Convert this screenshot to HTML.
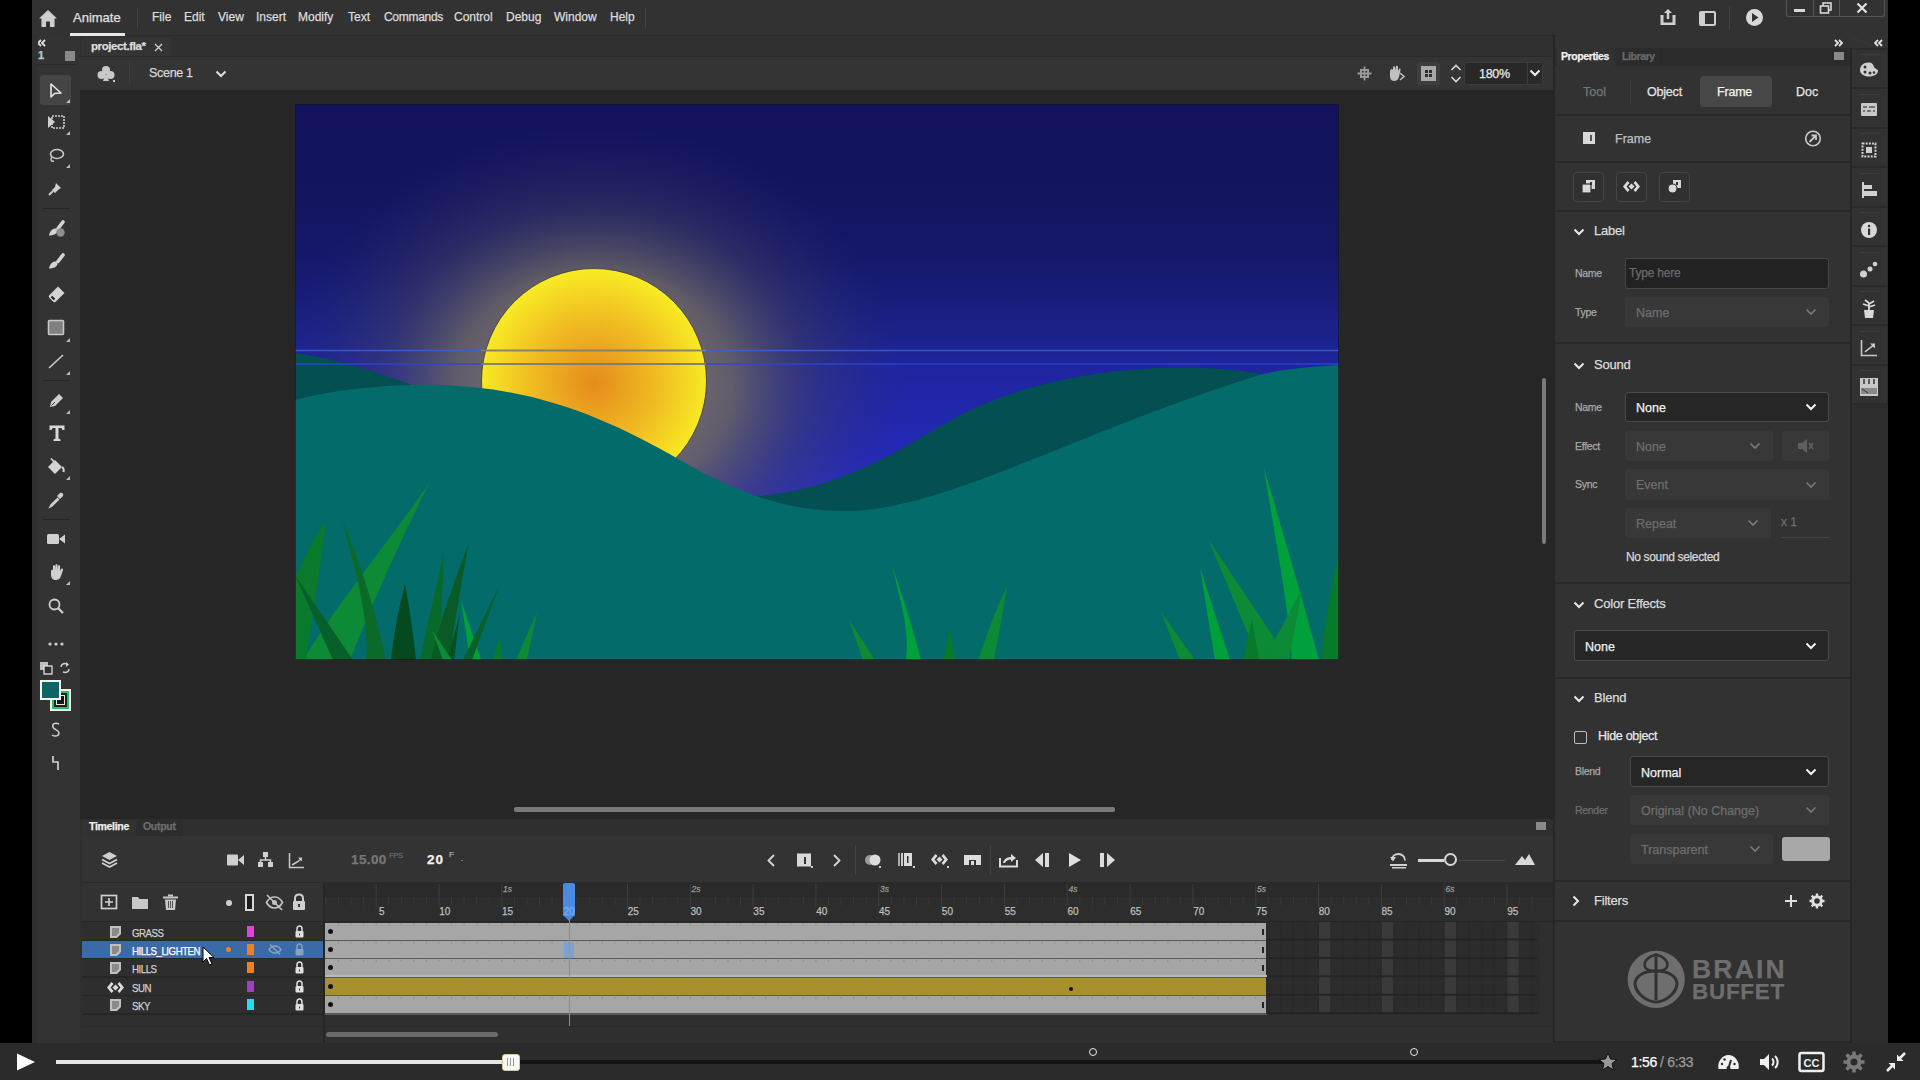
<!DOCTYPE html>
<html><head><meta charset="utf-8">
<style>
*{margin:0;padding:0;box-sizing:border-box}
html,body{width:1920px;height:1080px;overflow:hidden;background:#000;font-family:"Liberation Sans",sans-serif;color:#d4d4d4}
div.a{-webkit-text-stroke:0.25px currentColor;white-space:nowrap}
.a{position:absolute}
#menubar{left:32px;top:0;width:1856px;height:35px;background:#323232}
#toolbar{left:32px;top:35px;width:48px;height:1008px;background:#333333}
#tabbar{left:80px;top:35px;width:1473px;height:22px;background:#303030;border-top:1px solid #2a2a2a;border-bottom:1px solid #2a2a2a}
#scenebar{left:80px;top:57px;width:1473px;height:33px;background:#343434}
#paste{left:80px;top:90px;width:1473px;height:729px;background:#262626}
#timeline{left:80px;top:819px;width:1473px;height:224px;background:#2f2f2f}
#props{left:1553px;top:35px;width:297px;height:1008px;background:#323232}
#rstrip{left:1850px;top:35px;width:38px;height:1008px;background:#2d2d2d}
#player{left:0;top:1043px;width:1920px;height:37px;background:#2b2b2b}
.mi{font-size:12px;color:#dcdcdc;top:10px}
</style></head><body>
<div id="menubar" class="a"></div>
<div id="toolbar" class="a"></div>
<div id="tabbar" class="a"></div>
<div id="scenebar" class="a"></div>
<div id="paste" class="a"></div>
<div id="timeline" class="a"></div>
<div id="props" class="a"></div>
<div id="rstrip" class="a"></div>
<div id="player" class="a"></div>


<!-- MENU BAR -->
<svg class="a" style="left:38px;top:9px" width="20" height="19" viewBox="0 0 20 19"><path d="M10 1 L19 9.5 L16.5 9.5 L16.5 18 L12 18 L12 12.5 L8 12.5 L8 18 L3.5 18 L3.5 9.5 L1 9.5 Z" fill="#cfcfcf"/></svg>
<div class="a" style="left:73px;top:10px;font-size:13px;color:#e0e0e0">Animate</div>
<div class="a" style="left:70px;top:33px;width:55px;height:2.5px;background:#e8e8e8"></div>
<div class="a" style="left:137px;top:8px;width:1px;height:20px;background:#444"></div>
<div class="a mi" style="left:152px">File</div>
<div class="a mi" style="left:184px">Edit</div>
<div class="a mi" style="left:218px">View</div>
<div class="a mi" style="left:256px">Insert</div>
<div class="a mi" style="left:298px">Modify</div>
<div class="a mi" style="left:348px">Text</div>
<div class="a mi" style="left:384px;letter-spacing:-0.3px">Commands</div>
<div class="a mi" style="left:454px">Control</div>
<div class="a mi" style="left:506px">Debug</div>
<div class="a mi" style="left:554px">Window</div>
<div class="a mi" style="left:610px">Help</div>
<div class="a" style="left:645px;top:8px;width:1px;height:20px;background:#444"></div>
<!-- top right icons -->
<svg class="a" style="left:1658px;top:7px" width="20" height="20" viewBox="0 0 20 20"><path d="M10 2 L14 6 L11.2 6 L11.2 12 L8.8 12 L8.8 6 L6 6 Z" fill="#cfcfcf"/><path d="M2.5 8 L5.5 8 L5.5 15.5 L14.5 15.5 L14.5 8 L17.5 8 L17.5 18 L2.5 18 Z" fill="#cfcfcf"/></svg>
<svg class="a" style="left:1699px;top:11px" width="17" height="15" viewBox="0 0 17 15"><rect x="1" y="1" width="15" height="13" rx="1" fill="none" stroke="#cfcfcf" stroke-width="2"/><rect x="2" y="2" width="4" height="11" fill="#cfcfcf"/></svg>
<div class="a" style="left:1729px;top:7px;width:1px;height:22px;background:#444"></div>
<svg class="a" style="left:1745px;top:8px" width="19" height="19" viewBox="0 0 19 19"><circle cx="9.5" cy="9.5" r="8.5" fill="#d8d8d8"/><path d="M7 5 L13.5 9.5 L7 14 Z" fill="#323232"/></svg>
<div class="a" style="left:1786px;top:0;width:99px;height:17px;border:1px solid #555;border-top:none;border-radius:0 0 3px 3px"></div>
<div class="a" style="left:1813px;top:0;width:1px;height:17px;background:#555"></div>
<div class="a" style="left:1839px;top:0;width:1px;height:17px;background:#555"></div>
<div class="a" style="left:1794px;top:9px;width:11px;height:3px;background:#d8d8d8"></div>
<svg class="a" style="left:1819px;top:2px" width="14" height="12" viewBox="0 0 14 12"><rect x="4" y="1" width="8" height="7" fill="none" stroke="#d8d8d8" stroke-width="1.6"/><rect x="1.5" y="4" width="8" height="7" fill="#323232" stroke="#d8d8d8" stroke-width="1.6"/></svg>
<svg class="a" style="left:1856px;top:2px" width="12" height="12" viewBox="0 0 12 12"><path d="M1.5 1.5 L10.5 10.5 M10.5 1.5 L1.5 10.5" stroke="#e0e0e0" stroke-width="2.2"/></svg>

<!-- DOC TAB BAR -->
<div class="a" style="left:82px;top:38px;width:89px;height:18px;background:#343434"></div>
<div class="a" style="left:91px;top:40px;font-size:11.5px;font-weight:bold;color:#dedede;letter-spacing:-0.4px">project.fla*</div>
<svg class="a" style="left:154px;top:43px" width="9" height="9" viewBox="0 0 9 9"><path d="M1 1 L8 8 M8 1 L1 8" stroke="#cfcfcf" stroke-width="1.3"/></svg>
<!-- left toolbar top -->
<svg class="a" style="left:37px;top:39px" width="10" height="8" viewBox="0 0 10 8"><path d="M4 1 L1 4 L4 7 M8 1 L5 4 L8 7" fill="none" stroke="#e0e0e0" stroke-width="1.8"/></svg>
<div class="a" style="left:38px;top:49px;font-size:11px;font-weight:bold;color:#b8c8d8">1</div>
<div class="a" style="left:65px;top:51px;width:10px;height:10px;background:#8a8a8a"></div>
<div class="a" style="left:36px;top:64px;width:40px;height:1px;background:#2a2a2a"></div>

<div class="a" style="left:40px;top:75px;width:31px;height:30px;background:#454545;border-radius:3px"></div>
<svg class="a" style="left:48px;top:82px" width="16" height="18" viewBox="0 0 16 18"><path d="M3 2 L3 15 L6.5 11.5 L13 11 Z" fill="none" stroke="#e6e6e6" stroke-width="1.6" stroke-linejoin="round"/></svg>
<svg class="a" style="left:66px;top:99px" width="4" height="4" viewBox="0 0 4 4"><path d="M4 0 L4 4 L0 4Z" fill="#bbb"/></svg>
<svg class="a" style="left:46px;top:113px" width="20" height="18" viewBox="0 0 20 18"><path d="M2 3 L9 9 L2 15Z" fill="#d0d0d0"/><rect x="6" y="3" width="12" height="12" fill="none" stroke="#d0d0d0" stroke-width="1.6" stroke-dasharray="2 1"/></svg>
<svg class="a" style="left:66px;top:131px" width="4" height="4" viewBox="0 0 4 4"><path d="M4 0 L4 4 L0 4Z" fill="#bbb"/></svg>
<svg class="a" style="left:47px;top:147px" width="18" height="17" viewBox="0 0 18 17"><ellipse cx="10" cy="7" rx="6.5" ry="4.5" fill="none" stroke="#c8c8c8" stroke-width="1.6"/><path d="M5 10 C3 12 4 15 7 14" fill="none" stroke="#c8c8c8" stroke-width="1.5"/></svg>
<svg class="a" style="left:66px;top:164px" width="4" height="4" viewBox="0 0 4 4"><path d="M4 0 L4 4 L0 4Z" fill="#bbb"/></svg>
<svg class="a" style="left:47px;top:180px" width="18" height="17" viewBox="0 0 18 17"><path d="M9 3 L14 8 L11 10 L8 13 L5 10 L8 7Z" fill="#d0d0d0"/><path d="M6 11 L2 15" stroke="#d0d0d0" stroke-width="1.8"/></svg>
<div class="a" style="left:43px;top:208px;width:27px;height:1px;background:#242424"></div>
<svg class="a" style="left:47px;top:219px" width="19" height="19" viewBox="0 0 19 19"><path d="M16 3 L11 9.5" stroke="#d4d4d4" stroke-width="3.6" stroke-linecap="round"/><path d="M9.5 9.5 C6 9 3 11 2 16.5 C6 16.5 10 15 10.5 12Z" fill="#d4d4d4"/><circle cx="13.5" cy="13.5" r="4.2" fill="#8e8e8e"/></svg>
<svg class="a" style="left:47px;top:252px" width="19" height="19" viewBox="0 0 19 19"><path d="M16 3 L11 9.5" stroke="#d4d4d4" stroke-width="3.6" stroke-linecap="round"/><path d="M9.5 9.5 C6 9 3 11 2 16.5 C6 16.5 10 15 10.5 12Z" fill="#d4d4d4"/></svg>
<svg class="a" style="left:47px;top:285px" width="19" height="19" viewBox="0 0 19 19"><path d="M11 1.5 L17.5 8 L9 16.5 C8 17.5 7 17.5 6 16.5 L2.5 13 C1.5 12 1.5 11 2.5 10Z" fill="#d4d4d4"/><path d="M4.5 11.5 L7.5 14.5" stroke="#252525" stroke-width="2.2"/></svg>
<svg class="a" style="left:47px;top:319px" width="18" height="18" viewBox="0 0 18 18"><rect x="1.5" y="1.5" width="15" height="14" fill="#808080" stroke="#c8c8c8" stroke-width="1.6" rx="1"/></svg>
<svg class="a" style="left:66px;top:338px" width="4" height="4" viewBox="0 0 4 4"><path d="M4 0 L4 4 L0 4Z" fill="#bbb"/></svg>
<svg class="a" style="left:47px;top:352px" width="18" height="18" viewBox="0 0 18 18"><path d="M2 16 L16 3" stroke="#c8c8c8" stroke-width="1.7"/></svg>
<svg class="a" style="left:66px;top:371px" width="4" height="4" viewBox="0 0 4 4"><path d="M4 0 L4 4 L0 4Z" fill="#bbb"/></svg>
<div class="a" style="left:43px;top:380px;width:27px;height:1px;background:#242424"></div>
<svg class="a" style="left:47px;top:392px" width="18" height="18" viewBox="0 0 18 18"><path d="M12 2 L16 6 L8 14 L3 15 L4 10Z" fill="#d0d0d0"/><path d="M4.5 13.5 L8 10" stroke="#333" stroke-width="1"/></svg>
<svg class="a" style="left:66px;top:410px" width="4" height="4" viewBox="0 0 4 4"><path d="M4 0 L4 4 L0 4Z" fill="#bbb"/></svg>
<svg class="a" style="left:48px;top:424px" width="18" height="18" viewBox="0 0 18 18"><path d="M1.5 1.5 H16.5 V6 H14.5 L13.5 4 H10.5 V14.5 L12.5 15.5 V17 H5.5 V15.5 L7.5 14.5 V4 H4.5 L3.5 6 H1.5Z" fill="#d8d8d8"/></svg>
<svg class="a" style="left:47px;top:457px" width="19" height="19" viewBox="0 0 19 19"><path d="M1 10 L8 3 L15 10 L8 17Z" fill="#d4d4d4"/><path d="M4 1.5 L9 7" stroke="#d4d4d4" stroke-width="1.8"/><path d="M15 10 C16.5 11 17 13 16.5 15" fill="none" stroke="#d4d4d4" stroke-width="2"/></svg>
<svg class="a" style="left:66px;top:476px" width="4" height="4" viewBox="0 0 4 4"><path d="M4 0 L4 4 L0 4Z" fill="#bbb"/></svg>
<svg class="a" style="left:47px;top:491px" width="18" height="18" viewBox="0 0 18 18"><path d="M13 2 C15 1 17 3 16 5 L13 8 L10 5Z" fill="#d0d0d0"/><path d="M11 7 L4 14 L3 16 L5 15 L12 8" fill="none" stroke="#d0d0d0" stroke-width="1.5"/></svg>
<div class="a" style="left:43px;top:519px;width:27px;height:1px;background:#242424"></div>
<svg class="a" style="left:46px;top:531px" width="20" height="16" viewBox="0 0 20 16"><rect x="1" y="3" width="12" height="10" rx="1.5" fill="#d0d0d0"/><path d="M13 8 L19 3.5 L19 12.5Z" fill="#d0d0d0"/></svg>
<svg class="a" style="left:47px;top:563px" width="19" height="19" viewBox="0 0 19 19"><path d="M4 9 C4 6 6 6 6 8 L6 3 C6 2 8 2 8 3 L8 7 L8.5 2 C8.5 1 10.5 1 10.5 2 L10.5 7 L11 3 C11 2 13 2 13 3 L13 8 L14 6 C15 5 16.5 6 16 7 L14 13 C13 16 11 17 9 17 C6 17 4 15 4 12Z" fill="#d0d0d0"/></svg>
<svg class="a" style="left:66px;top:581px" width="4" height="4" viewBox="0 0 4 4"><path d="M4 0 L4 4 L0 4Z" fill="#bbb"/></svg>
<svg class="a" style="left:47px;top:597px" width="18" height="18" viewBox="0 0 18 18"><circle cx="7.5" cy="7.5" r="5" fill="none" stroke="#d0d0d0" stroke-width="1.8"/><path d="M11 11 L16 16" stroke="#d0d0d0" stroke-width="2.2"/></svg>
<svg class="a" style="left:47px;top:640px" width="18" height="8" viewBox="0 0 18 8"><circle cx="3" cy="4" r="1.6" fill="#d0d0d0"/><circle cx="9" cy="4" r="1.6" fill="#d0d0d0"/><circle cx="15" cy="4" r="1.6" fill="#d0d0d0"/></svg>
<svg class="a" style="left:39px;top:661px" width="14" height="14" viewBox="0 0 14 14"><rect x="1" y="1" width="8" height="8" fill="#c0c0c0"/><rect x="5" y="5" width="8" height="8" fill="#323232" stroke="#e0e0e0" stroke-width="1.3"/></svg>
<svg class="a" style="left:58px;top:661px" width="14" height="14" viewBox="0 0 14 14"><path d="M3 6 C3 3 6 2 9 3" fill="none" stroke="#d0d0d0" stroke-width="1.5"/><path d="M8 1 L11 3.5 L8 6Z" fill="#d0d0d0"/><path d="M11 8 C11 11 8 12 5 11" fill="none" stroke="#d0d0d0" stroke-width="1.5"/></svg>
<div class="a" style="left:50px;top:689px;width:21px;height:22px;background:#1f1f1f;border:2px solid #f2f2f2"></div>
<div class="a" style="left:52px;top:691px;width:17px;height:18px;border:2px solid #22c060"></div>
<div class="a" style="left:56px;top:695px;width:9px;height:10px;border:1.5px solid #e8e8e8;background:#151515"></div>
<div class="a" style="left:40px;top:680px;width:21px;height:20px;background:#0e6566;border:2px solid #f4f4f4"></div>
<svg class="a" style="left:49px;top:721px" width="14" height="18" viewBox="0 0 14 18"><path d="M10 3 C6 1 3 3 4 6 C5 9 10 9 10 12 C10 15 6 16 3 14" fill="none" stroke="#d0d0d0" stroke-width="1.5"/></svg>
<svg class="a" style="left:49px;top:754px" width="14" height="18" viewBox="0 0 14 18"><path d="M4 2 L4 8 L9 8 L9 16" fill="none" stroke="#d0d0d0" stroke-width="1.7"/></svg>
<div class="a" style="left:32px;top:35px;width:6px;height:1008px;background:#303030"></div>
<!-- SCENE BAR -->
<svg class="a" style="left:97px;top:65px" width="19" height="18" viewBox="0 0 19 18"><circle cx="9" cy="5" r="4" fill="#c8c8c8"/><circle cx="4.5" cy="10" r="4" fill="#c8c8c8"/><circle cx="13.5" cy="10" r="4" fill="#c8c8c8"/><path d="M9 8 L12 16 L6 16 Z" fill="#c8c8c8"/><rect x="16" y="15" width="2" height="2" fill="#c8c8c8"/></svg>
<div class="a" style="left:129px;top:62px;width:1px;height:23px;background:#3e3e3e"></div>
<div class="a" style="left:149px;top:66px;font-size:12.5px;color:#d8d8d8;letter-spacing:-0.3px">Scene 1</div>
<svg class="a" style="left:215px;top:70px" width="12" height="8" viewBox="0 0 12 8"><path d="M1.5 1.5 L6 6 L10.5 1.5" fill="none" stroke="#e0e0e0" stroke-width="2"/></svg>
<!-- scene bar right icons -->
<svg class="a" style="left:1357px;top:66px" width="15" height="15" viewBox="0 0 15 15"><rect x="4" y="4" width="7" height="7" fill="none" stroke="#9a9a9a" stroke-width="2"/><path d="M7.5 0.5 V14.5 M0.5 7.5 H14.5" stroke="#9a9a9a" stroke-width="1.8"/></svg>
<svg class="a" style="left:1387px;top:65px" width="19" height="17" viewBox="0 0 19 17"><path d="M3 7 C3 4 5 3 6 5 L6 2 C6 1 8 1 8 2 L8 5 L9 1.5 C9 0.5 11 0.5 11 1.5 L11 6 L12 4 C13 3 14 4 13.5 5 L12 12 C11 15 9 16 7 16 C4 16 3 13 3 11 Z" fill="#c0c0c0"/><path d="M13 8 L17 11.5 L13 15" fill="none" stroke="#c0c0c0" stroke-width="1.5"/></svg>
<div class="a" style="left:1417px;top:62px;width:23px;height:23px;background:#3d3d3d;border-radius:3px"></div>
<svg class="a" style="left:1420px;top:65px" width="17" height="17" viewBox="0 0 17 17"><rect x="1" y="1" width="15" height="15" fill="#a8a8a8"/><rect x="5" y="5" width="7" height="7" fill="#2e2e2e"/><path d="M8.5 5 V12 M5 8.5 H12" stroke="#a8a8a8" stroke-width="1"/></svg>
<svg class="a" style="left:1450px;top:63px" width="12" height="21" viewBox="0 0 12 21"><path d="M1.5 7 L6 2.5 L10.5 7 M1.5 14 L6 18.5 L10.5 14" fill="none" stroke="#d8d8d8" stroke-width="1.6"/></svg>
<div class="a" style="left:1464px;top:62px;width:79px;height:23px;border:1px solid #3c3c3c;border-radius:3px;background:#282828"></div>
<div class="a" style="left:1527px;top:63px;width:15px;height:21px;background:#2a2a2a;border-left:1px solid #3c3c3c"></div>
<div class="a" style="left:1479px;top:67px;font-size:12.5px;color:#e8e8e8;letter-spacing:-0.3px">180%</div>
<svg class="a" style="left:1529px;top:69px" width="12" height="8" viewBox="0 0 12 8"><path d="M1.5 1.5 L6 6 L10.5 1.5" fill="none" stroke="#f0f0f0" stroke-width="2"/></svg>

<!-- TIMELINE -->
<div class="a" style="left:82px;top:819px;width:1471px;height:224px;background:#2f2f2f"></div>
<div class="a" style="left:82px;top:820px;width:54px;height:16px;background:#323232"></div>
<div class="a" style="left:89px;top:820px;font-size:10.5px;font-weight:bold;color:#f0f0f0;letter-spacing:-0.3px">Timeline</div>
<div class="a" style="left:136px;top:820px;width:47px;height:16px;background:#2c2c2c"></div>
<div class="a" style="left:143px;top:820px;font-size:10.5px;font-weight:bold;color:#6e6e6e;letter-spacing:-0.3px">Output</div>
<div class="a" style="left:1536px;top:822px;width:10px;height:8px;background:#8a8a8a"></div>
<div class="a" style="left:82px;top:836px;width:1471px;height:47px;background:#333333"></div>
<div class="a" style="left:82px;top:882px;width:1471px;height:1px;background:#2a2a2a"></div>
<svg class="a" style="left:101px;top:851px" width="17" height="18" viewBox="0 0 17 18"><path d="M8.5 1 L16 5 L8.5 9 L1 5Z" fill="#d0d0d0"/><path d="M1 8.5 L8.5 12.5 L16 8.5" fill="none" stroke="#d0d0d0" stroke-width="1.8"/><path d="M1 12 L8.5 16 L16 12" fill="none" stroke="#d0d0d0" stroke-width="1.8"/></svg>
<svg class="a" style="left:226px;top:853px" width="19" height="14" viewBox="0 0 19 14"><rect x="1" y="1.5" width="11" height="11" rx="1" fill="#d0d0d0"/><path d="M12 7 L18 2 L18 12Z" fill="#d0d0d0"/></svg>
<svg class="a" style="left:257px;top:851px" width="17" height="18" viewBox="0 0 17 18"><rect x="6" y="1" width="5" height="5" fill="#d0d0d0"/><rect x="1" y="11" width="5" height="5" fill="#d0d0d0"/><rect x="11" y="11" width="5" height="5" fill="#d0d0d0"/><path d="M8.5 6 V9 M3.5 11 V9 H13.5 V11" fill="none" stroke="#d0d0d0" stroke-width="1.5"/></svg>
<svg class="a" style="left:288px;top:852px" width="17" height="17" viewBox="0 0 17 17"><path d="M1.5 1 V15.5 H16" fill="none" stroke="#c8c8c8" stroke-width="1.5"/><path d="M4 13 C7 11 10 10 13 7" fill="none" stroke="#c8c8c8" stroke-width="1.5"/><path d="M10 5.5 L14 5.5 L14 9.5Z" fill="#c8c8c8"/></svg>
<div class="a" style="left:351px;top:852px;font-size:13.5px;font-weight:bold;color:#777;letter-spacing:0.4px">15.00</div>
<div class="a" style="left:389px;top:851px;font-size:7.5px;color:#666;letter-spacing:-0.3px">FPS</div>
<div class="a" style="left:427px;top:852px;font-size:13.5px;font-weight:bold;color:#f2f2f2;letter-spacing:1px">20</div>
<div class="a" style="left:449px;top:850px;font-size:8px;color:#aaa">F</div>
<div class="a" style="left:461px;top:860px;width:2px;height:1px;background:#777"></div>
<svg class="a" style="left:765px;top:853px" width="12" height="15" viewBox="0 0 12 15"><path d="M9 2 L3.5 7.5 L9 13" fill="none" stroke="#d8d8d8" stroke-width="1.8"/></svg>
<svg class="a" style="left:796px;top:852px" width="17" height="17" viewBox="0 0 17 17"><rect x="1" y="1.5" width="14" height="13" fill="#d8d8d8"/><rect x="8" y="5" width="2" height="7" fill="#333"/><rect x="15" y="14" width="2" height="2" fill="#ccc"/></svg>
<svg class="a" style="left:831px;top:853px" width="12" height="15" viewBox="0 0 12 15"><path d="M3 2 L8.5 7.5 L3 13" fill="none" stroke="#d8d8d8" stroke-width="1.8"/></svg>
<div class="a" style="left:855px;top:845px;width:1px;height:30px;background:#444"></div>
<svg class="a" style="left:864px;top:852px" width="19" height="17" viewBox="0 0 19 17"><circle cx="6" cy="8" r="5" fill="#999"/><circle cx="11" cy="8" r="5.5" fill="#dcdcdc"/><rect x="15" y="14" width="2" height="2" fill="#ccc"/></svg>
<svg class="a" style="left:897px;top:851px" width="19" height="18" viewBox="0 0 19 18"><rect x="1" y="2" width="2" height="13" fill="#aaa"/><rect x="4" y="2" width="2" height="13" fill="#ccc"/><rect x="7" y="2" width="8" height="13" fill="#dcdcdc"/><rect x="10" y="5" width="1.5" height="7" fill="#333"/><rect x="16" y="15" width="2" height="2" fill="#ccc"/></svg>
<svg class="a" style="left:930px;top:852px" width="20" height="17" viewBox="0 0 20 17"><path d="M5.5 2 L1 7.5 L5.5 13 L7.5 11 L4.5 7.5 L7.5 4Z" fill="#dcdcdc"/><path d="M13.5 2 L18 7.5 L13.5 13 L11.5 11 L14.5 7.5 L11.5 4Z" fill="#dcdcdc"/><path d="M9.5 4.5 L12.5 7.5 L9.5 10.5 L6.5 7.5Z" fill="#dcdcdc"/><rect x="17" y="14" width="2" height="2" fill="#ccc"/></svg>
<svg class="a" style="left:963px;top:853px" width="19" height="15" viewBox="0 0 19 15"><path d="M1 2 H18 V12 H13 V7 H6 V12 H1Z" fill="#dcdcdc"/><rect x="8" y="8" width="3" height="4" fill="#dcdcdc"/></svg>
<div class="a" style="left:990px;top:845px;width:1px;height:30px;background:#444"></div>
<svg class="a" style="left:999px;top:851px" width="20" height="17" viewBox="0 0 20 17"><path d="M1 7 V15.5 H18 V9" fill="none" stroke="#dcdcdc" stroke-width="2"/><path d="M4 12 C5 8 8 6 12 6 V3 L17 7 L12 11 V8.5 C9 8.5 7 10 6 12Z" fill="#dcdcdc"/></svg>
<svg class="a" style="left:1034px;top:852px" width="18" height="16" viewBox="0 0 18 16"><path d="M9 1 L1 8 L9 15Z" fill="#dcdcdc"/><rect x="11" y="1" width="4" height="14" fill="#dcdcdc"/></svg>
<svg class="a" style="left:1067px;top:852px" width="16" height="16" viewBox="0 0 16 16"><path d="M2 1 L14 8 L2 15Z" fill="#e0e0e0"/></svg>
<svg class="a" style="left:1099px;top:852px" width="18" height="16" viewBox="0 0 18 16"><rect x="1" y="1" width="4" height="14" fill="#dcdcdc"/><path d="M8 1 L16 8 L8 15Z" fill="#dcdcdc"/></svg>
<svg class="a" style="left:1389px;top:851px" width="19" height="18" viewBox="0 0 19 18"><path d="M3 9 C3 5 6 3 9.5 3 C13 3 16 5.5 16 9.5" fill="none" stroke="#d0d0d0" stroke-width="1.8"/><path d="M1 6 L4 10.5 L7 6Z" fill="#d0d0d0"/><rect x="1" y="13" width="17" height="2" fill="#d0d0d0"/><rect x="3" y="16" width="14" height="1.5" fill="#d0d0d0"/></svg>
<div class="a" style="left:1418px;top:858.5px;width:26px;height:3.5px;background:#d8d8d8"></div>
<div class="a" style="left:1444px;top:853px;width:13px;height:13px;border:2px solid #d8d8d8;border-radius:50%"></div>
<div class="a" style="left:1459px;top:859.5px;width:46px;height:1.5px;background:#4a4a4a"></div>
<svg class="a" style="left:1514px;top:852px" width="22" height="14" viewBox="0 0 22 14"><path d="M1 13 L8 4 L11 8 L15 2 L21 13Z" fill="#d8d8d8"/></svg>
<div class="a" style="left:82px;top:883px;width:242px;height:39px;background:#323232"></div>
<svg class="a" style="left:100px;top:894px" width="18" height="16" viewBox="0 0 18 16"><rect x="1.5" y="1.5" width="15" height="13" fill="none" stroke="#d0d0d0" stroke-width="1.7"/><path d="M9 4 V12 M5 8 H13" stroke="#d0d0d0" stroke-width="1.7"/></svg>
<svg class="a" style="left:131px;top:895px" width="18" height="15" viewBox="0 0 18 15"><path d="M1 2 H7 L8.5 4 H17 V14 H1Z" fill="#c8c8c8"/></svg>
<svg class="a" style="left:162px;top:894px" width="17" height="17" viewBox="0 0 17 17"><rect x="1" y="2.5" width="15" height="2" fill="#c8c8c8"/><rect x="6" y="0.5" width="5" height="2" fill="#c8c8c8"/><path d="M3 5.5 H14 L13 16 H4Z" fill="#c8c8c8"/><path d="M6.5 7 V14 M8.5 7 V14 M10.5 7 V14" stroke="#323232" stroke-width="0.8"/></svg>
<div class="a" style="left:225.5px;top:899.5px;width:6px;height:6px;border-radius:50%;background:#d0d0d0"></div>
<div class="a" style="left:245px;top:894px;width:9px;height:17px;border:2px solid #d8d8d8;background:#1e1e1e"></div>
<svg class="a" style="left:265px;top:894px" width="19" height="17" viewBox="0 0 19 17"><path d="M1.5 8.5 C4 4 7 3 9.5 3 C12 3 15 4 17.5 8.5 C15 13 12 14 9.5 14 C7 14 4 13 1.5 8.5Z" fill="none" stroke="#c0c0c0" stroke-width="1.7"/><circle cx="9.5" cy="8.5" r="2.5" fill="#c0c0c0"/><path d="M2 1 L17 16" stroke="#c0c0c0" stroke-width="1.7"/></svg>
<svg class="a" style="left:291px;top:893px" width="16" height="18" viewBox="0 0 16 18"><path d="M4 8 V5.5 C4 2.5 6 1.5 8 1.5 C10 1.5 12 2.5 12 5.5 V8" fill="none" stroke="#d0d0d0" stroke-width="2"/><rect x="2" y="8" width="12" height="9" rx="1" fill="#d0d0d0"/><rect x="7" y="11" width="2" height="3" fill="#333"/></svg>
<div class="a" style="left:325px;top:883px;width:1228px;height:39px;background:#2d2d2d"></div>
<div class="a" style="left:323px;top:883px;width:2px;height:160px;background:#262626"></div>
<svg class="a" style="left:0;top:883px" width="1553" height="39"><rect x="325" y="0" width="1228" height="14" fill="#2a2a2a"/><rect x="325.4" y="14" width="1" height="8" fill="#3a3a3a"/><rect x="338.0" y="14" width="1" height="8" fill="#3a3a3a"/><rect x="350.5" y="14" width="1" height="8" fill="#3a3a3a"/><rect x="363.1" y="14" width="1" height="8" fill="#3a3a3a"/><rect x="375.7" y="1" width="1" height="23" fill="#3e3e3e"/><rect x="388.2" y="14" width="1" height="8" fill="#3a3a3a"/><rect x="400.8" y="14" width="1" height="8" fill="#3a3a3a"/><rect x="413.4" y="14" width="1" height="8" fill="#3a3a3a"/><rect x="425.9" y="14" width="1" height="8" fill="#3a3a3a"/><rect x="438.5" y="1" width="1" height="23" fill="#3e3e3e"/><rect x="451.0" y="14" width="1" height="8" fill="#3a3a3a"/><rect x="463.6" y="14" width="1" height="8" fill="#3a3a3a"/><rect x="476.2" y="14" width="1" height="8" fill="#3a3a3a"/><rect x="488.7" y="14" width="1" height="8" fill="#3a3a3a"/><rect x="501.3" y="1" width="1" height="23" fill="#3e3e3e"/><rect x="513.9" y="14" width="1" height="8" fill="#3a3a3a"/><rect x="526.4" y="14" width="1" height="8" fill="#3a3a3a"/><rect x="539.0" y="14" width="1" height="8" fill="#3a3a3a"/><rect x="551.6" y="14" width="1" height="8" fill="#3a3a3a"/><rect x="564.1" y="1" width="1" height="23" fill="#3e3e3e"/><rect x="576.7" y="14" width="1" height="8" fill="#3a3a3a"/><rect x="589.3" y="14" width="1" height="8" fill="#3a3a3a"/><rect x="601.8" y="14" width="1" height="8" fill="#3a3a3a"/><rect x="614.4" y="14" width="1" height="8" fill="#3a3a3a"/><rect x="627.0" y="1" width="1" height="23" fill="#3e3e3e"/><rect x="639.5" y="14" width="1" height="8" fill="#3a3a3a"/><rect x="652.1" y="14" width="1" height="8" fill="#3a3a3a"/><rect x="664.7" y="14" width="1" height="8" fill="#3a3a3a"/><rect x="677.2" y="14" width="1" height="8" fill="#3a3a3a"/><rect x="689.8" y="1" width="1" height="23" fill="#3e3e3e"/><rect x="702.3" y="14" width="1" height="8" fill="#3a3a3a"/><rect x="714.9" y="14" width="1" height="8" fill="#3a3a3a"/><rect x="727.5" y="14" width="1" height="8" fill="#3a3a3a"/><rect x="740.0" y="14" width="1" height="8" fill="#3a3a3a"/><rect x="752.6" y="1" width="1" height="23" fill="#3e3e3e"/><rect x="765.2" y="14" width="1" height="8" fill="#3a3a3a"/><rect x="777.7" y="14" width="1" height="8" fill="#3a3a3a"/><rect x="790.3" y="14" width="1" height="8" fill="#3a3a3a"/><rect x="802.9" y="14" width="1" height="8" fill="#3a3a3a"/><rect x="815.4" y="1" width="1" height="23" fill="#3e3e3e"/><rect x="828.0" y="14" width="1" height="8" fill="#3a3a3a"/><rect x="840.6" y="14" width="1" height="8" fill="#3a3a3a"/><rect x="853.1" y="14" width="1" height="8" fill="#3a3a3a"/><rect x="865.7" y="14" width="1" height="8" fill="#3a3a3a"/><rect x="878.3" y="1" width="1" height="23" fill="#3e3e3e"/><rect x="890.8" y="14" width="1" height="8" fill="#3a3a3a"/><rect x="903.4" y="14" width="1" height="8" fill="#3a3a3a"/><rect x="916.0" y="14" width="1" height="8" fill="#3a3a3a"/><rect x="928.5" y="14" width="1" height="8" fill="#3a3a3a"/><rect x="941.1" y="1" width="1" height="23" fill="#3e3e3e"/><rect x="953.6" y="14" width="1" height="8" fill="#3a3a3a"/><rect x="966.2" y="14" width="1" height="8" fill="#3a3a3a"/><rect x="978.8" y="14" width="1" height="8" fill="#3a3a3a"/><rect x="991.3" y="14" width="1" height="8" fill="#3a3a3a"/><rect x="1003.9" y="1" width="1" height="23" fill="#3e3e3e"/><rect x="1016.5" y="14" width="1" height="8" fill="#3a3a3a"/><rect x="1029.0" y="14" width="1" height="8" fill="#3a3a3a"/><rect x="1041.6" y="14" width="1" height="8" fill="#3a3a3a"/><rect x="1054.2" y="14" width="1" height="8" fill="#3a3a3a"/><rect x="1066.7" y="1" width="1" height="23" fill="#3e3e3e"/><rect x="1079.3" y="14" width="1" height="8" fill="#3a3a3a"/><rect x="1091.9" y="14" width="1" height="8" fill="#3a3a3a"/><rect x="1104.4" y="14" width="1" height="8" fill="#3a3a3a"/><rect x="1117.0" y="14" width="1" height="8" fill="#3a3a3a"/><rect x="1129.6" y="1" width="1" height="23" fill="#3e3e3e"/><rect x="1142.1" y="14" width="1" height="8" fill="#3a3a3a"/><rect x="1154.7" y="14" width="1" height="8" fill="#3a3a3a"/><rect x="1167.3" y="14" width="1" height="8" fill="#3a3a3a"/><rect x="1179.8" y="14" width="1" height="8" fill="#3a3a3a"/><rect x="1192.4" y="1" width="1" height="23" fill="#3e3e3e"/><rect x="1204.9" y="14" width="1" height="8" fill="#3a3a3a"/><rect x="1217.5" y="14" width="1" height="8" fill="#3a3a3a"/><rect x="1230.1" y="14" width="1" height="8" fill="#3a3a3a"/><rect x="1242.6" y="14" width="1" height="8" fill="#3a3a3a"/><rect x="1255.2" y="1" width="1" height="23" fill="#3e3e3e"/><rect x="1267.8" y="14" width="1" height="8" fill="#3a3a3a"/><rect x="1280.3" y="14" width="1" height="8" fill="#3a3a3a"/><rect x="1292.9" y="14" width="1" height="8" fill="#3a3a3a"/><rect x="1305.5" y="14" width="1" height="8" fill="#3a3a3a"/><rect x="1318.0" y="1" width="1" height="23" fill="#3e3e3e"/><rect x="1330.6" y="14" width="1" height="8" fill="#3a3a3a"/><rect x="1343.2" y="14" width="1" height="8" fill="#3a3a3a"/><rect x="1355.7" y="14" width="1" height="8" fill="#3a3a3a"/><rect x="1368.3" y="14" width="1" height="8" fill="#3a3a3a"/><rect x="1380.9" y="1" width="1" height="23" fill="#3e3e3e"/><rect x="1393.4" y="14" width="1" height="8" fill="#3a3a3a"/><rect x="1406.0" y="14" width="1" height="8" fill="#3a3a3a"/><rect x="1418.6" y="14" width="1" height="8" fill="#3a3a3a"/><rect x="1431.1" y="14" width="1" height="8" fill="#3a3a3a"/><rect x="1443.7" y="1" width="1" height="23" fill="#3e3e3e"/><rect x="1456.2" y="14" width="1" height="8" fill="#3a3a3a"/><rect x="1468.8" y="14" width="1" height="8" fill="#3a3a3a"/><rect x="1481.4" y="14" width="1" height="8" fill="#3a3a3a"/><rect x="1493.9" y="14" width="1" height="8" fill="#3a3a3a"/><rect x="1506.5" y="1" width="1" height="23" fill="#3e3e3e"/><rect x="1519.1" y="14" width="1" height="8" fill="#3a3a3a"/><rect x="1531.6" y="14" width="1" height="8" fill="#3a3a3a"/></svg>
<div class="a" style="left:371.9px;top:906px;width:20px;text-align:center;font-size:10px;color:#bdbdbd">5</div>
<div class="a" style="left:434.8px;top:906px;width:20px;text-align:center;font-size:10px;color:#bdbdbd">10</div>
<div class="a" style="left:497.6px;top:906px;width:20px;text-align:center;font-size:10px;color:#bdbdbd">15</div>
<div class="a" style="left:623.2px;top:906px;width:20px;text-align:center;font-size:10px;color:#bdbdbd">25</div>
<div class="a" style="left:686.1px;top:906px;width:20px;text-align:center;font-size:10px;color:#bdbdbd">30</div>
<div class="a" style="left:748.9px;top:906px;width:20px;text-align:center;font-size:10px;color:#bdbdbd">35</div>
<div class="a" style="left:811.7px;top:906px;width:20px;text-align:center;font-size:10px;color:#bdbdbd">40</div>
<div class="a" style="left:874.5px;top:906px;width:20px;text-align:center;font-size:10px;color:#bdbdbd">45</div>
<div class="a" style="left:937.4px;top:906px;width:20px;text-align:center;font-size:10px;color:#bdbdbd">50</div>
<div class="a" style="left:1000.2px;top:906px;width:20px;text-align:center;font-size:10px;color:#bdbdbd">55</div>
<div class="a" style="left:1063.0px;top:906px;width:20px;text-align:center;font-size:10px;color:#bdbdbd">60</div>
<div class="a" style="left:1125.8px;top:906px;width:20px;text-align:center;font-size:10px;color:#bdbdbd">65</div>
<div class="a" style="left:1188.7px;top:906px;width:20px;text-align:center;font-size:10px;color:#bdbdbd">70</div>
<div class="a" style="left:1251.5px;top:906px;width:20px;text-align:center;font-size:10px;color:#bdbdbd">75</div>
<div class="a" style="left:1314.3px;top:906px;width:20px;text-align:center;font-size:10px;color:#bdbdbd">80</div>
<div class="a" style="left:1377.1px;top:906px;width:20px;text-align:center;font-size:10px;color:#bdbdbd">85</div>
<div class="a" style="left:1440.0px;top:906px;width:20px;text-align:center;font-size:10px;color:#bdbdbd">90</div>
<div class="a" style="left:1502.8px;top:906px;width:20px;text-align:center;font-size:10px;color:#bdbdbd">95</div>
<div class="a" style="left:497.6px;top:884px;width:20px;text-align:center;font-size:8.5px;color:#9a9a9a;font-style:italic">1s</div>
<div class="a" style="left:686.1px;top:884px;width:20px;text-align:center;font-size:8.5px;color:#9a9a9a;font-style:italic">2s</div>
<div class="a" style="left:874.5px;top:884px;width:20px;text-align:center;font-size:8.5px;color:#9a9a9a;font-style:italic">3s</div>
<div class="a" style="left:1063.0px;top:884px;width:20px;text-align:center;font-size:8.5px;color:#9a9a9a;font-style:italic">4s</div>
<div class="a" style="left:1251.5px;top:884px;width:20px;text-align:center;font-size:8.5px;color:#9a9a9a;font-style:italic">5s</div>
<div class="a" style="left:1440.0px;top:884px;width:20px;text-align:center;font-size:8.5px;color:#9a9a9a;font-style:italic">6s</div>
<div class="a" style="left:82px;top:921px;width:1471px;height:1px;background:#262626"></div>
<div class="a" style="left:325px;top:922px;width:1213px;height:93px;background:#2a2a2a"></div>
<svg class="a" style="left:0;top:922px" width="1540" height="93"><rect x="1268.8" y="0" width="11.3" height="92" fill="#2c2c2c"/><rect x="1281.3" y="0" width="11.3" height="92" fill="#2c2c2c"/><rect x="1293.9" y="0" width="11.3" height="92" fill="#2c2c2c"/><rect x="1306.5" y="0" width="11.3" height="92" fill="#2c2c2c"/><rect x="1319.0" y="0" width="11.3" height="92" fill="#3a3a3a"/><rect x="1331.6" y="0" width="11.3" height="92" fill="#2c2c2c"/><rect x="1344.2" y="0" width="11.3" height="92" fill="#2c2c2c"/><rect x="1356.7" y="0" width="11.3" height="92" fill="#2c2c2c"/><rect x="1369.3" y="0" width="11.3" height="92" fill="#2c2c2c"/><rect x="1381.9" y="0" width="11.3" height="92" fill="#3a3a3a"/><rect x="1394.4" y="0" width="11.3" height="92" fill="#2c2c2c"/><rect x="1407.0" y="0" width="11.3" height="92" fill="#2c2c2c"/><rect x="1419.6" y="0" width="11.3" height="92" fill="#2c2c2c"/><rect x="1432.1" y="0" width="11.3" height="92" fill="#2c2c2c"/><rect x="1444.7" y="0" width="11.3" height="92" fill="#3a3a3a"/><rect x="1457.2" y="0" width="11.3" height="92" fill="#2c2c2c"/><rect x="1469.8" y="0" width="11.3" height="92" fill="#2c2c2c"/><rect x="1482.4" y="0" width="11.3" height="92" fill="#2c2c2c"/><rect x="1494.9" y="0" width="11.3" height="92" fill="#2c2c2c"/><rect x="1507.5" y="0" width="11.3" height="92" fill="#3a3a3a"/><rect x="1520.1" y="0" width="11.3" height="92" fill="#2c2c2c"/><rect x="1532.6" y="0" width="11.3" height="92" fill="#2c2c2c"/><rect x="1267" y="16.6" width="270" height="1.8" fill="#242424"/><rect x="1267" y="35.0" width="270" height="1.8" fill="#242424"/><rect x="1267" y="53.4" width="270" height="1.8" fill="#242424"/><rect x="1267" y="71.8" width="270" height="1.8" fill="#242424"/><rect x="1267" y="90.2" width="270" height="1.8" fill="#242424"/></svg>
<div class="a" style="left:82px;top:922.6px;width:241px;height:17px;background:#2e2e2e"></div>
<div class="a" style="left:82px;top:939.6px;width:241px;height:1.4px;background:#262626"></div>
<svg class="a" style="left:109px;top:924.6px" width="14" height="14" viewBox="0 0 14 14"><path d="M1 1 H12 V9 L8 13 H1Z" fill="#c0c0c0"/><path d="M3 3 H10 V8 L7 11 H3Z" fill="#8a8a8a"/></svg>
<div class="a" style="left:132px;top:926.6px;font-size:10.5px;color:#d0d0d0;letter-spacing:-0.5px;transform:scaleX(0.92);transform-origin:left">GRASS</div>
<div class="a" style="left:247px;top:925.6px;width:7px;height:11px;background:#e840e0"></div>
<svg class="a" style="left:294px;top:924.6px" width="11" height="13" viewBox="0 0 11 13"><path d="M3 6 V4 C3 2 4 1 5.5 1 C7 1 8 2 8 4 V6" fill="none" stroke="#e0e0e0" stroke-width="1.5"/><rect x="1.5" y="6" width="8" height="6.5" rx="1" fill="#e0e0e0"/><rect x="5" y="8.5" width="1" height="2" fill="#333"/></svg>
<div class="a" style="left:325px;top:922.6px;width:942px;height:17px;background:#a6a6a6"></div>
<div class="a" style="left:328px;top:928.6px;width:5px;height:5px;border-radius:50%;background:#111"></div>
<div class="a" style="left:1262px;top:928.6px;width:2px;height:6px;background:#222"></div>
<div class="a" style="left:325px;top:939.6px;width:942px;height:1.4px;background:#5a5a5a"></div>
<div class="a" style="left:82px;top:941.0px;width:241px;height:17px;background:#3b6ba6"></div>
<div class="a" style="left:82px;top:958.0px;width:241px;height:1.4px;background:#262626"></div>
<svg class="a" style="left:109px;top:943.0px" width="14" height="14" viewBox="0 0 14 14"><path d="M1 1 H12 V9 L8 13 H1Z" fill="#c0c0c0"/><path d="M3 3 H10 V8 L7 11 H3Z" fill="#8a8a8a"/></svg>
<div class="a" style="left:132px;top:945.0px;font-size:10.5px;color:#ffffff;letter-spacing:-0.5px;transform:scaleX(0.92);transform-origin:left">HILLS_LIGHTEN</div>
<div class="a" style="left:247px;top:944.0px;width:7px;height:11px;background:#f08020"></div>
<div class="a" style="left:226px;top:947.0px;width:5px;height:5px;border-radius:50%;background:#f08020"></div>
<svg class="a" style="left:268px;top:944.0px" width="14" height="11" viewBox="0 0 14 11"><path d="M1 5.5 C3 2.5 5 2 7 2 C9 2 11 2.5 13 5.5 C11 8.5 9 9 7 9 C5 9 3 8.5 1 5.5Z" fill="none" stroke="#8aa0c0" stroke-width="1.4"/><path d="M2 0.5 L12 10.5" stroke="#8aa0c0" stroke-width="1.4"/></svg>
<svg class="a" style="left:294px;top:943.0px" width="11" height="13" viewBox="0 0 11 13"><path d="M3 6 V4 C3 2 4 1 5.5 1 C7 1 8 2 8 4 V6" fill="none" stroke="#8aa0c0" stroke-width="1.5"/><rect x="1.5" y="6" width="8" height="6.5" rx="1" fill="#8aa0c0"/></svg>
<div class="a" style="left:325px;top:941.0px;width:942px;height:17px;background:#a6a6a6"></div>
<div class="a" style="left:328px;top:947.0px;width:5px;height:5px;border-radius:50%;background:#111"></div>
<div class="a" style="left:1262px;top:947.0px;width:2px;height:6px;background:#222"></div>
<div class="a" style="left:325px;top:958.0px;width:942px;height:1.4px;background:#5a5a5a"></div>
<div class="a" style="left:82px;top:959.4px;width:241px;height:17px;background:#2e2e2e"></div>
<div class="a" style="left:82px;top:976.4px;width:241px;height:1.4px;background:#262626"></div>
<svg class="a" style="left:109px;top:961.4px" width="14" height="14" viewBox="0 0 14 14"><path d="M1 1 H12 V9 L8 13 H1Z" fill="#c0c0c0"/><path d="M3 3 H10 V8 L7 11 H3Z" fill="#8a8a8a"/></svg>
<div class="a" style="left:132px;top:963.4px;font-size:10.5px;color:#d0d0d0;letter-spacing:-0.5px;transform:scaleX(0.92);transform-origin:left">HILLS</div>
<div class="a" style="left:247px;top:962.4px;width:7px;height:11px;background:#f08020"></div>
<svg class="a" style="left:294px;top:961.4px" width="11" height="13" viewBox="0 0 11 13"><path d="M3 6 V4 C3 2 4 1 5.5 1 C7 1 8 2 8 4 V6" fill="none" stroke="#e0e0e0" stroke-width="1.5"/><rect x="1.5" y="6" width="8" height="6.5" rx="1" fill="#e0e0e0"/><rect x="5" y="8.5" width="1" height="2" fill="#333"/></svg>
<div class="a" style="left:325px;top:959.4px;width:942px;height:17px;background:#a6a6a6"></div>
<div class="a" style="left:328px;top:965.4px;width:5px;height:5px;border-radius:50%;background:#111"></div>
<div class="a" style="left:1262px;top:965.4px;width:2px;height:6px;background:#222"></div>
<div class="a" style="left:325px;top:976.4px;width:942px;height:1.4px;background:#5a5a5a"></div>
<div class="a" style="left:82px;top:977.8px;width:241px;height:17px;background:#2e2e2e"></div>
<div class="a" style="left:82px;top:994.8px;width:241px;height:1.4px;background:#262626"></div>
<svg class="a" style="left:106px;top:979.8px" width="19" height="15" viewBox="0 0 19 15"><path d="M5.5 2 L1 7.5 L5.5 13 L7.5 11 L4.5 7.5 L7.5 4Z" fill="#dcdcdc"/><path d="M13.5 2 L18 7.5 L13.5 13 L11.5 11 L14.5 7.5 L11.5 4Z" fill="#dcdcdc"/><path d="M9.5 4.5 L12.5 7.5 L9.5 10.5 L6.5 7.5Z" fill="#dcdcdc"/></svg>
<div class="a" style="left:132px;top:981.8px;font-size:10.5px;color:#d0d0d0;letter-spacing:-0.5px;transform:scaleX(0.92);transform-origin:left">SUN</div>
<div class="a" style="left:247px;top:980.8px;width:7px;height:11px;background:#a040c8"></div>
<svg class="a" style="left:294px;top:979.8px" width="11" height="13" viewBox="0 0 11 13"><path d="M3 6 V4 C3 2 4 1 5.5 1 C7 1 8 2 8 4 V6" fill="none" stroke="#e0e0e0" stroke-width="1.5"/><rect x="1.5" y="6" width="8" height="6.5" rx="1" fill="#e0e0e0"/><rect x="5" y="8.5" width="1" height="2" fill="#333"/></svg>
<div class="a" style="left:325px;top:977.8px;width:942px;height:17px;background:#a8902f"></div>
<div class="a" style="left:328px;top:983.8px;width:5px;height:5px;border-radius:50%;background:#111"></div>
<div class="a" style="left:325px;top:994.8px;width:942px;height:1.4px;background:#5a5a5a"></div>
<div class="a" style="left:82px;top:996.2px;width:241px;height:17px;background:#2e2e2e"></div>
<div class="a" style="left:82px;top:1013.2px;width:241px;height:1.4px;background:#262626"></div>
<svg class="a" style="left:109px;top:998.2px" width="14" height="14" viewBox="0 0 14 14"><path d="M1 1 H12 V9 L8 13 H1Z" fill="#c0c0c0"/><path d="M3 3 H10 V8 L7 11 H3Z" fill="#8a8a8a"/></svg>
<div class="a" style="left:132px;top:1000.2px;font-size:10.5px;color:#d0d0d0;letter-spacing:-0.5px;transform:scaleX(0.92);transform-origin:left">SKY</div>
<div class="a" style="left:247px;top:999.2px;width:7px;height:11px;background:#20e0f0"></div>
<svg class="a" style="left:294px;top:998.2px" width="11" height="13" viewBox="0 0 11 13"><path d="M3 6 V4 C3 2 4 1 5.5 1 C7 1 8 2 8 4 V6" fill="none" stroke="#e0e0e0" stroke-width="1.5"/><rect x="1.5" y="6" width="8" height="6.5" rx="1" fill="#e0e0e0"/><rect x="5" y="8.5" width="1" height="2" fill="#333"/></svg>
<div class="a" style="left:325px;top:996.2px;width:942px;height:17px;background:#a6a6a6"></div>
<div class="a" style="left:328px;top:1002.2px;width:5px;height:5px;border-radius:50%;background:#111"></div>
<div class="a" style="left:1262px;top:1002.2px;width:2px;height:6px;background:#222"></div>
<div class="a" style="left:325px;top:1013.2px;width:942px;height:1.4px;background:#5a5a5a"></div>
<svg class="a" style="left:0;top:0" width="1553" height="1043"><rect x="338.0" y="923.1" width="1" height="2" fill="#8c8c8c"/><rect x="350.5" y="923.1" width="1" height="2" fill="#8c8c8c"/><rect x="363.1" y="923.1" width="1" height="2" fill="#8c8c8c"/><rect x="375.7" y="923.1" width="1" height="2" fill="#8c8c8c"/><rect x="388.2" y="923.1" width="1" height="2" fill="#8c8c8c"/><rect x="400.8" y="923.1" width="1" height="2" fill="#8c8c8c"/><rect x="413.4" y="923.1" width="1" height="2" fill="#8c8c8c"/><rect x="425.9" y="923.1" width="1" height="2" fill="#8c8c8c"/><rect x="438.5" y="923.1" width="1" height="2" fill="#8c8c8c"/><rect x="451.0" y="923.1" width="1" height="2" fill="#8c8c8c"/><rect x="463.6" y="923.1" width="1" height="2" fill="#8c8c8c"/><rect x="476.2" y="923.1" width="1" height="2" fill="#8c8c8c"/><rect x="488.7" y="923.1" width="1" height="2" fill="#8c8c8c"/><rect x="501.3" y="923.1" width="1" height="2" fill="#8c8c8c"/><rect x="513.9" y="923.1" width="1" height="2" fill="#8c8c8c"/><rect x="526.4" y="923.1" width="1" height="2" fill="#8c8c8c"/><rect x="539.0" y="923.1" width="1" height="2" fill="#8c8c8c"/><rect x="551.6" y="923.1" width="1" height="2" fill="#8c8c8c"/><rect x="564.1" y="923.1" width="1" height="2" fill="#8c8c8c"/><rect x="576.7" y="923.1" width="1" height="2" fill="#8c8c8c"/><rect x="589.3" y="923.1" width="1" height="2" fill="#8c8c8c"/><rect x="601.8" y="923.1" width="1" height="2" fill="#8c8c8c"/><rect x="614.4" y="923.1" width="1" height="2" fill="#8c8c8c"/><rect x="627.0" y="923.1" width="1" height="2" fill="#8c8c8c"/><rect x="639.5" y="923.1" width="1" height="2" fill="#8c8c8c"/><rect x="652.1" y="923.1" width="1" height="2" fill="#8c8c8c"/><rect x="664.7" y="923.1" width="1" height="2" fill="#8c8c8c"/><rect x="677.2" y="923.1" width="1" height="2" fill="#8c8c8c"/><rect x="689.8" y="923.1" width="1" height="2" fill="#8c8c8c"/><rect x="702.3" y="923.1" width="1" height="2" fill="#8c8c8c"/><rect x="714.9" y="923.1" width="1" height="2" fill="#8c8c8c"/><rect x="727.5" y="923.1" width="1" height="2" fill="#8c8c8c"/><rect x="740.0" y="923.1" width="1" height="2" fill="#8c8c8c"/><rect x="752.6" y="923.1" width="1" height="2" fill="#8c8c8c"/><rect x="765.2" y="923.1" width="1" height="2" fill="#8c8c8c"/><rect x="777.7" y="923.1" width="1" height="2" fill="#8c8c8c"/><rect x="790.3" y="923.1" width="1" height="2" fill="#8c8c8c"/><rect x="802.9" y="923.1" width="1" height="2" fill="#8c8c8c"/><rect x="815.4" y="923.1" width="1" height="2" fill="#8c8c8c"/><rect x="828.0" y="923.1" width="1" height="2" fill="#8c8c8c"/><rect x="840.6" y="923.1" width="1" height="2" fill="#8c8c8c"/><rect x="853.1" y="923.1" width="1" height="2" fill="#8c8c8c"/><rect x="865.7" y="923.1" width="1" height="2" fill="#8c8c8c"/><rect x="878.3" y="923.1" width="1" height="2" fill="#8c8c8c"/><rect x="890.8" y="923.1" width="1" height="2" fill="#8c8c8c"/><rect x="903.4" y="923.1" width="1" height="2" fill="#8c8c8c"/><rect x="916.0" y="923.1" width="1" height="2" fill="#8c8c8c"/><rect x="928.5" y="923.1" width="1" height="2" fill="#8c8c8c"/><rect x="941.1" y="923.1" width="1" height="2" fill="#8c8c8c"/><rect x="953.6" y="923.1" width="1" height="2" fill="#8c8c8c"/><rect x="966.2" y="923.1" width="1" height="2" fill="#8c8c8c"/><rect x="978.8" y="923.1" width="1" height="2" fill="#8c8c8c"/><rect x="991.3" y="923.1" width="1" height="2" fill="#8c8c8c"/><rect x="1003.9" y="923.1" width="1" height="2" fill="#8c8c8c"/><rect x="1016.5" y="923.1" width="1" height="2" fill="#8c8c8c"/><rect x="1029.0" y="923.1" width="1" height="2" fill="#8c8c8c"/><rect x="1041.6" y="923.1" width="1" height="2" fill="#8c8c8c"/><rect x="1054.2" y="923.1" width="1" height="2" fill="#8c8c8c"/><rect x="1066.7" y="923.1" width="1" height="2" fill="#8c8c8c"/><rect x="1079.3" y="923.1" width="1" height="2" fill="#8c8c8c"/><rect x="1091.9" y="923.1" width="1" height="2" fill="#8c8c8c"/><rect x="1104.4" y="923.1" width="1" height="2" fill="#8c8c8c"/><rect x="1117.0" y="923.1" width="1" height="2" fill="#8c8c8c"/><rect x="1129.6" y="923.1" width="1" height="2" fill="#8c8c8c"/><rect x="1142.1" y="923.1" width="1" height="2" fill="#8c8c8c"/><rect x="1154.7" y="923.1" width="1" height="2" fill="#8c8c8c"/><rect x="1167.3" y="923.1" width="1" height="2" fill="#8c8c8c"/><rect x="1179.8" y="923.1" width="1" height="2" fill="#8c8c8c"/><rect x="1192.4" y="923.1" width="1" height="2" fill="#8c8c8c"/><rect x="1204.9" y="923.1" width="1" height="2" fill="#8c8c8c"/><rect x="1217.5" y="923.1" width="1" height="2" fill="#8c8c8c"/><rect x="1230.1" y="923.1" width="1" height="2" fill="#8c8c8c"/><rect x="1242.6" y="923.1" width="1" height="2" fill="#8c8c8c"/><rect x="1255.2" y="923.1" width="1" height="2" fill="#8c8c8c"/><rect x="338.0" y="941.5" width="1" height="2" fill="#8c8c8c"/><rect x="350.5" y="941.5" width="1" height="2" fill="#8c8c8c"/><rect x="363.1" y="941.5" width="1" height="2" fill="#8c8c8c"/><rect x="375.7" y="941.5" width="1" height="2" fill="#8c8c8c"/><rect x="388.2" y="941.5" width="1" height="2" fill="#8c8c8c"/><rect x="400.8" y="941.5" width="1" height="2" fill="#8c8c8c"/><rect x="413.4" y="941.5" width="1" height="2" fill="#8c8c8c"/><rect x="425.9" y="941.5" width="1" height="2" fill="#8c8c8c"/><rect x="438.5" y="941.5" width="1" height="2" fill="#8c8c8c"/><rect x="451.0" y="941.5" width="1" height="2" fill="#8c8c8c"/><rect x="463.6" y="941.5" width="1" height="2" fill="#8c8c8c"/><rect x="476.2" y="941.5" width="1" height="2" fill="#8c8c8c"/><rect x="488.7" y="941.5" width="1" height="2" fill="#8c8c8c"/><rect x="501.3" y="941.5" width="1" height="2" fill="#8c8c8c"/><rect x="513.9" y="941.5" width="1" height="2" fill="#8c8c8c"/><rect x="526.4" y="941.5" width="1" height="2" fill="#8c8c8c"/><rect x="539.0" y="941.5" width="1" height="2" fill="#8c8c8c"/><rect x="551.6" y="941.5" width="1" height="2" fill="#8c8c8c"/><rect x="564.1" y="941.5" width="1" height="2" fill="#8c8c8c"/><rect x="576.7" y="941.5" width="1" height="2" fill="#8c8c8c"/><rect x="589.3" y="941.5" width="1" height="2" fill="#8c8c8c"/><rect x="601.8" y="941.5" width="1" height="2" fill="#8c8c8c"/><rect x="614.4" y="941.5" width="1" height="2" fill="#8c8c8c"/><rect x="627.0" y="941.5" width="1" height="2" fill="#8c8c8c"/><rect x="639.5" y="941.5" width="1" height="2" fill="#8c8c8c"/><rect x="652.1" y="941.5" width="1" height="2" fill="#8c8c8c"/><rect x="664.7" y="941.5" width="1" height="2" fill="#8c8c8c"/><rect x="677.2" y="941.5" width="1" height="2" fill="#8c8c8c"/><rect x="689.8" y="941.5" width="1" height="2" fill="#8c8c8c"/><rect x="702.3" y="941.5" width="1" height="2" fill="#8c8c8c"/><rect x="714.9" y="941.5" width="1" height="2" fill="#8c8c8c"/><rect x="727.5" y="941.5" width="1" height="2" fill="#8c8c8c"/><rect x="740.0" y="941.5" width="1" height="2" fill="#8c8c8c"/><rect x="752.6" y="941.5" width="1" height="2" fill="#8c8c8c"/><rect x="765.2" y="941.5" width="1" height="2" fill="#8c8c8c"/><rect x="777.7" y="941.5" width="1" height="2" fill="#8c8c8c"/><rect x="790.3" y="941.5" width="1" height="2" fill="#8c8c8c"/><rect x="802.9" y="941.5" width="1" height="2" fill="#8c8c8c"/><rect x="815.4" y="941.5" width="1" height="2" fill="#8c8c8c"/><rect x="828.0" y="941.5" width="1" height="2" fill="#8c8c8c"/><rect x="840.6" y="941.5" width="1" height="2" fill="#8c8c8c"/><rect x="853.1" y="941.5" width="1" height="2" fill="#8c8c8c"/><rect x="865.7" y="941.5" width="1" height="2" fill="#8c8c8c"/><rect x="878.3" y="941.5" width="1" height="2" fill="#8c8c8c"/><rect x="890.8" y="941.5" width="1" height="2" fill="#8c8c8c"/><rect x="903.4" y="941.5" width="1" height="2" fill="#8c8c8c"/><rect x="916.0" y="941.5" width="1" height="2" fill="#8c8c8c"/><rect x="928.5" y="941.5" width="1" height="2" fill="#8c8c8c"/><rect x="941.1" y="941.5" width="1" height="2" fill="#8c8c8c"/><rect x="953.6" y="941.5" width="1" height="2" fill="#8c8c8c"/><rect x="966.2" y="941.5" width="1" height="2" fill="#8c8c8c"/><rect x="978.8" y="941.5" width="1" height="2" fill="#8c8c8c"/><rect x="991.3" y="941.5" width="1" height="2" fill="#8c8c8c"/><rect x="1003.9" y="941.5" width="1" height="2" fill="#8c8c8c"/><rect x="1016.5" y="941.5" width="1" height="2" fill="#8c8c8c"/><rect x="1029.0" y="941.5" width="1" height="2" fill="#8c8c8c"/><rect x="1041.6" y="941.5" width="1" height="2" fill="#8c8c8c"/><rect x="1054.2" y="941.5" width="1" height="2" fill="#8c8c8c"/><rect x="1066.7" y="941.5" width="1" height="2" fill="#8c8c8c"/><rect x="1079.3" y="941.5" width="1" height="2" fill="#8c8c8c"/><rect x="1091.9" y="941.5" width="1" height="2" fill="#8c8c8c"/><rect x="1104.4" y="941.5" width="1" height="2" fill="#8c8c8c"/><rect x="1117.0" y="941.5" width="1" height="2" fill="#8c8c8c"/><rect x="1129.6" y="941.5" width="1" height="2" fill="#8c8c8c"/><rect x="1142.1" y="941.5" width="1" height="2" fill="#8c8c8c"/><rect x="1154.7" y="941.5" width="1" height="2" fill="#8c8c8c"/><rect x="1167.3" y="941.5" width="1" height="2" fill="#8c8c8c"/><rect x="1179.8" y="941.5" width="1" height="2" fill="#8c8c8c"/><rect x="1192.4" y="941.5" width="1" height="2" fill="#8c8c8c"/><rect x="1204.9" y="941.5" width="1" height="2" fill="#8c8c8c"/><rect x="1217.5" y="941.5" width="1" height="2" fill="#8c8c8c"/><rect x="1230.1" y="941.5" width="1" height="2" fill="#8c8c8c"/><rect x="1242.6" y="941.5" width="1" height="2" fill="#8c8c8c"/><rect x="1255.2" y="941.5" width="1" height="2" fill="#8c8c8c"/><rect x="338.0" y="959.9" width="1" height="2" fill="#8c8c8c"/><rect x="350.5" y="959.9" width="1" height="2" fill="#8c8c8c"/><rect x="363.1" y="959.9" width="1" height="2" fill="#8c8c8c"/><rect x="375.7" y="959.9" width="1" height="2" fill="#8c8c8c"/><rect x="388.2" y="959.9" width="1" height="2" fill="#8c8c8c"/><rect x="400.8" y="959.9" width="1" height="2" fill="#8c8c8c"/><rect x="413.4" y="959.9" width="1" height="2" fill="#8c8c8c"/><rect x="425.9" y="959.9" width="1" height="2" fill="#8c8c8c"/><rect x="438.5" y="959.9" width="1" height="2" fill="#8c8c8c"/><rect x="451.0" y="959.9" width="1" height="2" fill="#8c8c8c"/><rect x="463.6" y="959.9" width="1" height="2" fill="#8c8c8c"/><rect x="476.2" y="959.9" width="1" height="2" fill="#8c8c8c"/><rect x="488.7" y="959.9" width="1" height="2" fill="#8c8c8c"/><rect x="501.3" y="959.9" width="1" height="2" fill="#8c8c8c"/><rect x="513.9" y="959.9" width="1" height="2" fill="#8c8c8c"/><rect x="526.4" y="959.9" width="1" height="2" fill="#8c8c8c"/><rect x="539.0" y="959.9" width="1" height="2" fill="#8c8c8c"/><rect x="551.6" y="959.9" width="1" height="2" fill="#8c8c8c"/><rect x="564.1" y="959.9" width="1" height="2" fill="#8c8c8c"/><rect x="576.7" y="959.9" width="1" height="2" fill="#8c8c8c"/><rect x="589.3" y="959.9" width="1" height="2" fill="#8c8c8c"/><rect x="601.8" y="959.9" width="1" height="2" fill="#8c8c8c"/><rect x="614.4" y="959.9" width="1" height="2" fill="#8c8c8c"/><rect x="627.0" y="959.9" width="1" height="2" fill="#8c8c8c"/><rect x="639.5" y="959.9" width="1" height="2" fill="#8c8c8c"/><rect x="652.1" y="959.9" width="1" height="2" fill="#8c8c8c"/><rect x="664.7" y="959.9" width="1" height="2" fill="#8c8c8c"/><rect x="677.2" y="959.9" width="1" height="2" fill="#8c8c8c"/><rect x="689.8" y="959.9" width="1" height="2" fill="#8c8c8c"/><rect x="702.3" y="959.9" width="1" height="2" fill="#8c8c8c"/><rect x="714.9" y="959.9" width="1" height="2" fill="#8c8c8c"/><rect x="727.5" y="959.9" width="1" height="2" fill="#8c8c8c"/><rect x="740.0" y="959.9" width="1" height="2" fill="#8c8c8c"/><rect x="752.6" y="959.9" width="1" height="2" fill="#8c8c8c"/><rect x="765.2" y="959.9" width="1" height="2" fill="#8c8c8c"/><rect x="777.7" y="959.9" width="1" height="2" fill="#8c8c8c"/><rect x="790.3" y="959.9" width="1" height="2" fill="#8c8c8c"/><rect x="802.9" y="959.9" width="1" height="2" fill="#8c8c8c"/><rect x="815.4" y="959.9" width="1" height="2" fill="#8c8c8c"/><rect x="828.0" y="959.9" width="1" height="2" fill="#8c8c8c"/><rect x="840.6" y="959.9" width="1" height="2" fill="#8c8c8c"/><rect x="853.1" y="959.9" width="1" height="2" fill="#8c8c8c"/><rect x="865.7" y="959.9" width="1" height="2" fill="#8c8c8c"/><rect x="878.3" y="959.9" width="1" height="2" fill="#8c8c8c"/><rect x="890.8" y="959.9" width="1" height="2" fill="#8c8c8c"/><rect x="903.4" y="959.9" width="1" height="2" fill="#8c8c8c"/><rect x="916.0" y="959.9" width="1" height="2" fill="#8c8c8c"/><rect x="928.5" y="959.9" width="1" height="2" fill="#8c8c8c"/><rect x="941.1" y="959.9" width="1" height="2" fill="#8c8c8c"/><rect x="953.6" y="959.9" width="1" height="2" fill="#8c8c8c"/><rect x="966.2" y="959.9" width="1" height="2" fill="#8c8c8c"/><rect x="978.8" y="959.9" width="1" height="2" fill="#8c8c8c"/><rect x="991.3" y="959.9" width="1" height="2" fill="#8c8c8c"/><rect x="1003.9" y="959.9" width="1" height="2" fill="#8c8c8c"/><rect x="1016.5" y="959.9" width="1" height="2" fill="#8c8c8c"/><rect x="1029.0" y="959.9" width="1" height="2" fill="#8c8c8c"/><rect x="1041.6" y="959.9" width="1" height="2" fill="#8c8c8c"/><rect x="1054.2" y="959.9" width="1" height="2" fill="#8c8c8c"/><rect x="1066.7" y="959.9" width="1" height="2" fill="#8c8c8c"/><rect x="1079.3" y="959.9" width="1" height="2" fill="#8c8c8c"/><rect x="1091.9" y="959.9" width="1" height="2" fill="#8c8c8c"/><rect x="1104.4" y="959.9" width="1" height="2" fill="#8c8c8c"/><rect x="1117.0" y="959.9" width="1" height="2" fill="#8c8c8c"/><rect x="1129.6" y="959.9" width="1" height="2" fill="#8c8c8c"/><rect x="1142.1" y="959.9" width="1" height="2" fill="#8c8c8c"/><rect x="1154.7" y="959.9" width="1" height="2" fill="#8c8c8c"/><rect x="1167.3" y="959.9" width="1" height="2" fill="#8c8c8c"/><rect x="1179.8" y="959.9" width="1" height="2" fill="#8c8c8c"/><rect x="1192.4" y="959.9" width="1" height="2" fill="#8c8c8c"/><rect x="1204.9" y="959.9" width="1" height="2" fill="#8c8c8c"/><rect x="1217.5" y="959.9" width="1" height="2" fill="#8c8c8c"/><rect x="1230.1" y="959.9" width="1" height="2" fill="#8c8c8c"/><rect x="1242.6" y="959.9" width="1" height="2" fill="#8c8c8c"/><rect x="1255.2" y="959.9" width="1" height="2" fill="#8c8c8c"/><rect x="338.0" y="978.3" width="1" height="2" fill="#8c8c8c"/><rect x="350.5" y="978.3" width="1" height="2" fill="#8c8c8c"/><rect x="363.1" y="978.3" width="1" height="2" fill="#8c8c8c"/><rect x="375.7" y="978.3" width="1" height="2" fill="#8c8c8c"/><rect x="388.2" y="978.3" width="1" height="2" fill="#8c8c8c"/><rect x="400.8" y="978.3" width="1" height="2" fill="#8c8c8c"/><rect x="413.4" y="978.3" width="1" height="2" fill="#8c8c8c"/><rect x="425.9" y="978.3" width="1" height="2" fill="#8c8c8c"/><rect x="438.5" y="978.3" width="1" height="2" fill="#8c8c8c"/><rect x="451.0" y="978.3" width="1" height="2" fill="#8c8c8c"/><rect x="463.6" y="978.3" width="1" height="2" fill="#8c8c8c"/><rect x="476.2" y="978.3" width="1" height="2" fill="#8c8c8c"/><rect x="488.7" y="978.3" width="1" height="2" fill="#8c8c8c"/><rect x="501.3" y="978.3" width="1" height="2" fill="#8c8c8c"/><rect x="513.9" y="978.3" width="1" height="2" fill="#8c8c8c"/><rect x="526.4" y="978.3" width="1" height="2" fill="#8c8c8c"/><rect x="539.0" y="978.3" width="1" height="2" fill="#8c8c8c"/><rect x="551.6" y="978.3" width="1" height="2" fill="#8c8c8c"/><rect x="564.1" y="978.3" width="1" height="2" fill="#8c8c8c"/><rect x="576.7" y="978.3" width="1" height="2" fill="#8c8c8c"/><rect x="589.3" y="978.3" width="1" height="2" fill="#8c8c8c"/><rect x="601.8" y="978.3" width="1" height="2" fill="#8c8c8c"/><rect x="614.4" y="978.3" width="1" height="2" fill="#8c8c8c"/><rect x="627.0" y="978.3" width="1" height="2" fill="#8c8c8c"/><rect x="639.5" y="978.3" width="1" height="2" fill="#8c8c8c"/><rect x="652.1" y="978.3" width="1" height="2" fill="#8c8c8c"/><rect x="664.7" y="978.3" width="1" height="2" fill="#8c8c8c"/><rect x="677.2" y="978.3" width="1" height="2" fill="#8c8c8c"/><rect x="689.8" y="978.3" width="1" height="2" fill="#8c8c8c"/><rect x="702.3" y="978.3" width="1" height="2" fill="#8c8c8c"/><rect x="714.9" y="978.3" width="1" height="2" fill="#8c8c8c"/><rect x="727.5" y="978.3" width="1" height="2" fill="#8c8c8c"/><rect x="740.0" y="978.3" width="1" height="2" fill="#8c8c8c"/><rect x="752.6" y="978.3" width="1" height="2" fill="#8c8c8c"/><rect x="765.2" y="978.3" width="1" height="2" fill="#8c8c8c"/><rect x="777.7" y="978.3" width="1" height="2" fill="#8c8c8c"/><rect x="790.3" y="978.3" width="1" height="2" fill="#8c8c8c"/><rect x="802.9" y="978.3" width="1" height="2" fill="#8c8c8c"/><rect x="815.4" y="978.3" width="1" height="2" fill="#8c8c8c"/><rect x="828.0" y="978.3" width="1" height="2" fill="#8c8c8c"/><rect x="840.6" y="978.3" width="1" height="2" fill="#8c8c8c"/><rect x="853.1" y="978.3" width="1" height="2" fill="#8c8c8c"/><rect x="865.7" y="978.3" width="1" height="2" fill="#8c8c8c"/><rect x="878.3" y="978.3" width="1" height="2" fill="#8c8c8c"/><rect x="890.8" y="978.3" width="1" height="2" fill="#8c8c8c"/><rect x="903.4" y="978.3" width="1" height="2" fill="#8c8c8c"/><rect x="916.0" y="978.3" width="1" height="2" fill="#8c8c8c"/><rect x="928.5" y="978.3" width="1" height="2" fill="#8c8c8c"/><rect x="941.1" y="978.3" width="1" height="2" fill="#8c8c8c"/><rect x="953.6" y="978.3" width="1" height="2" fill="#8c8c8c"/><rect x="966.2" y="978.3" width="1" height="2" fill="#8c8c8c"/><rect x="978.8" y="978.3" width="1" height="2" fill="#8c8c8c"/><rect x="991.3" y="978.3" width="1" height="2" fill="#8c8c8c"/><rect x="1003.9" y="978.3" width="1" height="2" fill="#8c8c8c"/><rect x="1016.5" y="978.3" width="1" height="2" fill="#8c8c8c"/><rect x="1029.0" y="978.3" width="1" height="2" fill="#8c8c8c"/><rect x="1041.6" y="978.3" width="1" height="2" fill="#8c8c8c"/><rect x="1054.2" y="978.3" width="1" height="2" fill="#8c8c8c"/><rect x="1066.7" y="978.3" width="1" height="2" fill="#8c8c8c"/><rect x="1079.3" y="978.3" width="1" height="2" fill="#8c8c8c"/><rect x="1091.9" y="978.3" width="1" height="2" fill="#8c8c8c"/><rect x="1104.4" y="978.3" width="1" height="2" fill="#8c8c8c"/><rect x="1117.0" y="978.3" width="1" height="2" fill="#8c8c8c"/><rect x="1129.6" y="978.3" width="1" height="2" fill="#8c8c8c"/><rect x="1142.1" y="978.3" width="1" height="2" fill="#8c8c8c"/><rect x="1154.7" y="978.3" width="1" height="2" fill="#8c8c8c"/><rect x="1167.3" y="978.3" width="1" height="2" fill="#8c8c8c"/><rect x="1179.8" y="978.3" width="1" height="2" fill="#8c8c8c"/><rect x="1192.4" y="978.3" width="1" height="2" fill="#8c8c8c"/><rect x="1204.9" y="978.3" width="1" height="2" fill="#8c8c8c"/><rect x="1217.5" y="978.3" width="1" height="2" fill="#8c8c8c"/><rect x="1230.1" y="978.3" width="1" height="2" fill="#8c8c8c"/><rect x="1242.6" y="978.3" width="1" height="2" fill="#8c8c8c"/><rect x="1255.2" y="978.3" width="1" height="2" fill="#8c8c8c"/><rect x="338.0" y="996.7" width="1" height="2" fill="#8c8c8c"/><rect x="350.5" y="996.7" width="1" height="2" fill="#8c8c8c"/><rect x="363.1" y="996.7" width="1" height="2" fill="#8c8c8c"/><rect x="375.7" y="996.7" width="1" height="2" fill="#8c8c8c"/><rect x="388.2" y="996.7" width="1" height="2" fill="#8c8c8c"/><rect x="400.8" y="996.7" width="1" height="2" fill="#8c8c8c"/><rect x="413.4" y="996.7" width="1" height="2" fill="#8c8c8c"/><rect x="425.9" y="996.7" width="1" height="2" fill="#8c8c8c"/><rect x="438.5" y="996.7" width="1" height="2" fill="#8c8c8c"/><rect x="451.0" y="996.7" width="1" height="2" fill="#8c8c8c"/><rect x="463.6" y="996.7" width="1" height="2" fill="#8c8c8c"/><rect x="476.2" y="996.7" width="1" height="2" fill="#8c8c8c"/><rect x="488.7" y="996.7" width="1" height="2" fill="#8c8c8c"/><rect x="501.3" y="996.7" width="1" height="2" fill="#8c8c8c"/><rect x="513.9" y="996.7" width="1" height="2" fill="#8c8c8c"/><rect x="526.4" y="996.7" width="1" height="2" fill="#8c8c8c"/><rect x="539.0" y="996.7" width="1" height="2" fill="#8c8c8c"/><rect x="551.6" y="996.7" width="1" height="2" fill="#8c8c8c"/><rect x="564.1" y="996.7" width="1" height="2" fill="#8c8c8c"/><rect x="576.7" y="996.7" width="1" height="2" fill="#8c8c8c"/><rect x="589.3" y="996.7" width="1" height="2" fill="#8c8c8c"/><rect x="601.8" y="996.7" width="1" height="2" fill="#8c8c8c"/><rect x="614.4" y="996.7" width="1" height="2" fill="#8c8c8c"/><rect x="627.0" y="996.7" width="1" height="2" fill="#8c8c8c"/><rect x="639.5" y="996.7" width="1" height="2" fill="#8c8c8c"/><rect x="652.1" y="996.7" width="1" height="2" fill="#8c8c8c"/><rect x="664.7" y="996.7" width="1" height="2" fill="#8c8c8c"/><rect x="677.2" y="996.7" width="1" height="2" fill="#8c8c8c"/><rect x="689.8" y="996.7" width="1" height="2" fill="#8c8c8c"/><rect x="702.3" y="996.7" width="1" height="2" fill="#8c8c8c"/><rect x="714.9" y="996.7" width="1" height="2" fill="#8c8c8c"/><rect x="727.5" y="996.7" width="1" height="2" fill="#8c8c8c"/><rect x="740.0" y="996.7" width="1" height="2" fill="#8c8c8c"/><rect x="752.6" y="996.7" width="1" height="2" fill="#8c8c8c"/><rect x="765.2" y="996.7" width="1" height="2" fill="#8c8c8c"/><rect x="777.7" y="996.7" width="1" height="2" fill="#8c8c8c"/><rect x="790.3" y="996.7" width="1" height="2" fill="#8c8c8c"/><rect x="802.9" y="996.7" width="1" height="2" fill="#8c8c8c"/><rect x="815.4" y="996.7" width="1" height="2" fill="#8c8c8c"/><rect x="828.0" y="996.7" width="1" height="2" fill="#8c8c8c"/><rect x="840.6" y="996.7" width="1" height="2" fill="#8c8c8c"/><rect x="853.1" y="996.7" width="1" height="2" fill="#8c8c8c"/><rect x="865.7" y="996.7" width="1" height="2" fill="#8c8c8c"/><rect x="878.3" y="996.7" width="1" height="2" fill="#8c8c8c"/><rect x="890.8" y="996.7" width="1" height="2" fill="#8c8c8c"/><rect x="903.4" y="996.7" width="1" height="2" fill="#8c8c8c"/><rect x="916.0" y="996.7" width="1" height="2" fill="#8c8c8c"/><rect x="928.5" y="996.7" width="1" height="2" fill="#8c8c8c"/><rect x="941.1" y="996.7" width="1" height="2" fill="#8c8c8c"/><rect x="953.6" y="996.7" width="1" height="2" fill="#8c8c8c"/><rect x="966.2" y="996.7" width="1" height="2" fill="#8c8c8c"/><rect x="978.8" y="996.7" width="1" height="2" fill="#8c8c8c"/><rect x="991.3" y="996.7" width="1" height="2" fill="#8c8c8c"/><rect x="1003.9" y="996.7" width="1" height="2" fill="#8c8c8c"/><rect x="1016.5" y="996.7" width="1" height="2" fill="#8c8c8c"/><rect x="1029.0" y="996.7" width="1" height="2" fill="#8c8c8c"/><rect x="1041.6" y="996.7" width="1" height="2" fill="#8c8c8c"/><rect x="1054.2" y="996.7" width="1" height="2" fill="#8c8c8c"/><rect x="1066.7" y="996.7" width="1" height="2" fill="#8c8c8c"/><rect x="1079.3" y="996.7" width="1" height="2" fill="#8c8c8c"/><rect x="1091.9" y="996.7" width="1" height="2" fill="#8c8c8c"/><rect x="1104.4" y="996.7" width="1" height="2" fill="#8c8c8c"/><rect x="1117.0" y="996.7" width="1" height="2" fill="#8c8c8c"/><rect x="1129.6" y="996.7" width="1" height="2" fill="#8c8c8c"/><rect x="1142.1" y="996.7" width="1" height="2" fill="#8c8c8c"/><rect x="1154.7" y="996.7" width="1" height="2" fill="#8c8c8c"/><rect x="1167.3" y="996.7" width="1" height="2" fill="#8c8c8c"/><rect x="1179.8" y="996.7" width="1" height="2" fill="#8c8c8c"/><rect x="1192.4" y="996.7" width="1" height="2" fill="#8c8c8c"/><rect x="1204.9" y="996.7" width="1" height="2" fill="#8c8c8c"/><rect x="1217.5" y="996.7" width="1" height="2" fill="#8c8c8c"/><rect x="1230.1" y="996.7" width="1" height="2" fill="#8c8c8c"/><rect x="1242.6" y="996.7" width="1" height="2" fill="#8c8c8c"/><rect x="1255.2" y="996.7" width="1" height="2" fill="#8c8c8c"/></svg>
<div class="a" style="left:1069px;top:987px;width:4px;height:4px;border-radius:50%;background:#111"></div>
<div class="a" style="left:1266px;top:922px;width:1.5px;height:92px;background:#2a2a2a"></div>
<div class="a" style="left:325px;top:975px;width:942px;height:2px;background:#b8b6c8"></div>
<div class="a" style="left:563px;top:883px;width:12px;height:33px;background:#4a8ae0;border-radius:2px 2px 0 0"></div>
<svg class="a" style="left:563px;top:915px" width="12" height="7" viewBox="0 0 12 7"><path d="M0 0 H12 L6 6Z" fill="#4a8ae0"/></svg>
<div class="a" style="left:559px;top:906px;width:20px;text-align:center;font-size:10px;color:#78aef0">20</div>
<div class="a" style="left:568.5px;top:920px;width:1.5px;height:106px;background:#5a94e0"></div>
<div class="a" style="left:564px;top:942px;width:10px;height:16px;background:#6fa0e0;opacity:0.7"></div>
<div class="a" style="left:82px;top:1026px;width:1471px;height:1px;background:#2a2a2a"></div>
<div class="a" style="left:326px;top:1032px;width:172px;height:5px;border-radius:3px;background:#6a6a6a"></div>
<svg class="a" style="left:202px;top:946px" width="14" height="21" viewBox="0 0 14 21"><path d="M1 1 L1 16 L4.5 12.5 L7.5 19 L10 18 L7 11.5 L12 11.5Z" fill="#fff" stroke="#000" stroke-width="1"/></svg>
<!-- PROPS -->
<div class="a" style="left:1553px;top:35px;width:2px;height:1008px;background:#262626"></div>
<div class="a" style="left:1555px;top:35px;width:333px;height:13px;background:#323232"></div>
<svg class="a" style="left:1834px;top:39px" width="10" height="8" viewBox="0 0 10 8"><path d="M1 1 L4 4 L1 7 M5 1 L8 4 L5 7" fill="none" stroke="#e4e4e4" stroke-width="1.8"/></svg>
<svg class="a" style="left:1874px;top:39px" width="10" height="8" viewBox="0 0 10 8"><path d="M4 1 L1 4 L4 7 M8 1 L5 4 L8 7" fill="none" stroke="#e4e4e4" stroke-width="1.8"/></svg>
<svg class="a" style="left:1850px;top:35px" width="38" height="14" viewBox="0 0 38 14"><path d="M0 2 L30 13" stroke="#3a3a3a" stroke-width="1"/></svg>
<div class="a" style="left:1555px;top:48px;width:295px;height:18px;background:#2c2c2c"></div>
<div class="a" style="left:1557px;top:48px;width:58px;height:18px;background:#323232"></div>
<div class="a" style="left:1561px;top:50px;font-size:10.5px;font-weight:bold;color:#f0f0f0;letter-spacing:-0.4px">Properties</div>
<div class="a" style="left:1622px;top:50px;font-size:10.5px;font-weight:bold;color:#6a6a6a;letter-spacing:-0.4px">Library</div>
<div class="a" style="left:1661px;top:48px;width:1px;height:18px;background:#282828"></div>
<div class="a" style="left:1834px;top:52px;width:10px;height:8px;background:#8a8a8a"></div>
<div class="a" style="left:1555px;top:66px;width:295px;height:48px;background:#323232"></div>
<div class="a" style="left:1583px;top:85px;font-size:12.5px;color:#777">Tool</div>
<div class="a" style="left:1630px;top:79px;width:1px;height:26px;background:#3c3c3c"></div>
<div class="a" style="left:1647px;top:85px;font-size:12.5px;color:#e4e4e4;letter-spacing:-0.2px">Object</div>
<div class="a" style="left:1700px;top:76px;width:72px;height:31px;background:#474747;border-radius:4px"></div>
<div class="a" style="left:1717px;top:85px;font-size:12.5px;color:#f4f4f4;letter-spacing:-0.2px">Frame</div>
<div class="a" style="left:1796px;top:85px;font-size:12.5px;color:#e4e4e4">Doc</div>
<div class="a" style="left:1555px;top:114px;width:295px;height:1.5px;background:#282828"></div>
<svg class="a" style="left:1582px;top:131px" width="14" height="14" viewBox="0 0 14 14"><rect x="1" y="1" width="12" height="12" fill="#d8d8d8"/><rect x="8" y="4" width="2" height="6" fill="#555"/></svg>
<div class="a" style="left:1615px;top:132px;font-size:12.5px;color:#c0c0c0">Frame</div>
<svg class="a" style="left:1804px;top:130px" width="18" height="17" viewBox="0 0 18 17"><circle cx="9" cy="8.5" r="7.3" fill="none" stroke="#c8c8c8" stroke-width="1.6"/><path d="M5.5 12 L11.5 6 M7.5 5.5 H12 V10" fill="none" stroke="#c8c8c8" stroke-width="1.8"/></svg>
<div class="a" style="left:1555px;top:161px;width:295px;height:1.5px;background:#282828"></div>
<div class="a" style="left:1573px;top:172px;width:31px;height:30px;border:1px solid #454545;border-radius:4px;background:#303030"></div>
<div class="a" style="left:1616px;top:172px;width:31px;height:30px;border:1px solid #454545;border-radius:4px;background:#303030"></div>
<div class="a" style="left:1659px;top:172px;width:31px;height:30px;border:1px solid #454545;border-radius:4px;background:#303030"></div>
<svg class="a" style="left:1580px;top:178px" width="17" height="17" viewBox="0 0 17 17"><rect x="6" y="2" width="9" height="9" fill="#d8d8d8"/><rect x="2" y="6" width="9" height="9" fill="#d8d8d8" stroke="#303030" stroke-width="1.2"/><rect x="10" y="4" width="2" height="3" fill="#333"/></svg>
<svg class="a" style="left:1622px;top:179px" width="19" height="15" viewBox="0 0 19 15"><path d="M5.5 2 L1 7.5 L5.5 13 L7.5 11 L4.5 7.5 L7.5 4Z" fill="#dcdcdc"/><path d="M13.5 2 L18 7.5 L13.5 13 L11.5 11 L14.5 7.5 L11.5 4Z" fill="#dcdcdc"/><path d="M9.5 4.5 L12.5 7.5 L9.5 10.5 L6.5 7.5Z" fill="#dcdcdc"/></svg>
<svg class="a" style="left:1666px;top:178px" width="17" height="17" viewBox="0 0 17 17"><rect x="7" y="2" width="8" height="8" fill="#d8d8d8"/><circle cx="6.5" cy="10.5" r="4.5" fill="#d8d8d8" stroke="#303030" stroke-width="1.2"/><rect x="10" y="4" width="2" height="3" fill="#333"/></svg>
<div class="a" style="left:1555px;top:210px;width:295px;height:1.5px;background:#282828"></div>
<svg class="a" style="left:1573px;top:228px" width="12" height="8" viewBox="0 0 12 8"><path d="M1.5 1.5 L6 6 L10.5 1.5" fill="none" stroke="#e8e8e8" stroke-width="2"/></svg>
<div class="a" style="left:1594px;top:223px;font-size:13px;color:#dcdcdc;letter-spacing:-0.2px">Label</div>
<div class="a" style="left:1575px;top:267px;font-size:10.5px;color:#a8a8a8;letter-spacing:-0.3px">Name</div>
<div class="a" style="left:1625px;top:258px;width:204px;height:31px;background:#222222;border:1px solid #474747;border-radius:3px"></div>
<div class="a" style="left:1629px;top:266px;font-size:12px;color:#6a6a6a;letter-spacing:-0.2px">Type here</div>
<div class="a" style="left:1575px;top:306px;font-size:10.5px;color:#a8a8a8;letter-spacing:-0.3px">Type</div>
<div class="a" style="left:1625px;top:297px;width:204px;height:30px;background:#383838;border-radius:3px"></div>
<div class="a" style="left:1636px;top:305.5px;font-size:12.5px;color:#6e6e6e">Name</div>
<svg class="a" style="left:1805px;top:308.0px" width="12" height="8" viewBox="0 0 12 8"><path d="M1.5 1.5 L6 6 L10.5 1.5" fill="none" stroke="#7a7a7a" stroke-width="1.6"/></svg>
<div class="a" style="left:1555px;top:342px;width:295px;height:1.5px;background:#282828"></div>
<svg class="a" style="left:1573px;top:362px" width="12" height="8" viewBox="0 0 12 8"><path d="M1.5 1.5 L6 6 L10.5 1.5" fill="none" stroke="#e8e8e8" stroke-width="2"/></svg>
<div class="a" style="left:1594px;top:357px;font-size:13px;color:#dcdcdc;letter-spacing:-0.2px">Sound</div>
<div class="a" style="left:1575px;top:401px;font-size:10.5px;color:#a8a8a8;letter-spacing:-0.3px">Name</div>
<div class="a" style="left:1625px;top:392px;width:204px;height:30px;background:#262626;border:1px solid #4a4a4a;border-radius:3px"></div>
<div class="a" style="left:1636px;top:400.5px;font-size:12.5px;color:#f0f0f0">None</div>
<svg class="a" style="left:1805px;top:403.0px" width="12" height="8" viewBox="0 0 12 8"><path d="M1.5 1.5 L6 6 L10.5 1.5" fill="none" stroke="#f2f2f2" stroke-width="2"/></svg>
<div class="a" style="left:1575px;top:440px;font-size:10.5px;color:#a8a8a8;letter-spacing:-0.3px">Effect</div>
<div class="a" style="left:1625px;top:431px;width:148px;height:30px;background:#383838;border-radius:3px"></div>
<div class="a" style="left:1636px;top:439.5px;font-size:12.5px;color:#6e6e6e">None</div>
<svg class="a" style="left:1749px;top:442.0px" width="12" height="8" viewBox="0 0 12 8"><path d="M1.5 1.5 L6 6 L10.5 1.5" fill="none" stroke="#7a7a7a" stroke-width="1.6"/></svg>
<div class="a" style="left:1782px;top:431px;width:47px;height:30px;background:#383838;border-radius:3px"></div>
<svg class="a" style="left:1797px;top:438px" width="17" height="16" viewBox="0 0 17 16"><path d="M1 5 H5 L10 1 V15 L5 11 H1Z" fill="#5e5e5e"/><path d="M12 5 L16 11 M16 5 L12 11" stroke="#5e5e5e" stroke-width="1.6"/></svg>
<div class="a" style="left:1575px;top:478px;font-size:10.5px;color:#a8a8a8;letter-spacing:-0.3px">Sync</div>
<div class="a" style="left:1625px;top:469px;width:204px;height:31px;background:#383838;border-radius:3px"></div>
<div class="a" style="left:1636px;top:477.5px;font-size:12.5px;color:#6e6e6e">Event</div>
<svg class="a" style="left:1805px;top:480.5px" width="12" height="8" viewBox="0 0 12 8"><path d="M1.5 1.5 L6 6 L10.5 1.5" fill="none" stroke="#7a7a7a" stroke-width="1.6"/></svg>
<div class="a" style="left:1625px;top:508px;width:146px;height:30px;background:#383838;border-radius:3px"></div>
<div class="a" style="left:1636px;top:516.5px;font-size:12.5px;color:#6e6e6e">Repeat</div>
<svg class="a" style="left:1747px;top:519.0px" width="12" height="8" viewBox="0 0 12 8"><path d="M1.5 1.5 L6 6 L10.5 1.5" fill="none" stroke="#7a7a7a" stroke-width="1.6"/></svg>
<div class="a" style="left:1781px;top:515px;font-size:12px;color:#6e6e6e">x 1</div>
<div class="a" style="left:1781px;top:537px;width:48px;height:1px;background:#454545"></div>
<div class="a" style="left:1626px;top:550px;font-size:12px;color:#d8d8d8;letter-spacing:-0.35px">No sound selected</div>
<div class="a" style="left:1555px;top:582px;width:295px;height:1.5px;background:#282828"></div>
<svg class="a" style="left:1573px;top:601px" width="12" height="8" viewBox="0 0 12 8"><path d="M1.5 1.5 L6 6 L10.5 1.5" fill="none" stroke="#e8e8e8" stroke-width="2"/></svg>
<div class="a" style="left:1594px;top:596px;font-size:13px;color:#dcdcdc;letter-spacing:-0.2px">Color Effects</div>
<div class="a" style="left:1574px;top:630px;width:255px;height:31px;background:#262626;border:1px solid #4a4a4a;border-radius:3px"></div>
<div class="a" style="left:1585px;top:639.5px;font-size:12.5px;color:#f0f0f0">None</div>
<svg class="a" style="left:1805px;top:641.5px" width="12" height="8" viewBox="0 0 12 8"><path d="M1.5 1.5 L6 6 L10.5 1.5" fill="none" stroke="#f2f2f2" stroke-width="2"/></svg>
<div class="a" style="left:1555px;top:677px;width:295px;height:1.5px;background:#282828"></div>
<svg class="a" style="left:1573px;top:695px" width="12" height="8" viewBox="0 0 12 8"><path d="M1.5 1.5 L6 6 L10.5 1.5" fill="none" stroke="#e8e8e8" stroke-width="2"/></svg>
<div class="a" style="left:1594px;top:690px;font-size:13px;color:#dcdcdc;letter-spacing:-0.2px">Blend</div>
<div class="a" style="left:1574px;top:731px;width:13px;height:13px;border:1.5px solid #bdbdbd;border-radius:2px"></div>
<div class="a" style="left:1598px;top:729px;font-size:12.5px;color:#e8e8e8;letter-spacing:-0.3px">Hide object</div>
<div class="a" style="left:1575px;top:765px;font-size:10.5px;color:#a8a8a8;letter-spacing:-0.3px">Blend</div>
<div class="a" style="left:1630px;top:756px;width:199px;height:31px;background:#262626;border:1px solid #4a4a4a;border-radius:3px"></div>
<div class="a" style="left:1641px;top:765.5px;font-size:12.5px;color:#f0f0f0">Normal</div>
<svg class="a" style="left:1805px;top:767.5px" width="12" height="8" viewBox="0 0 12 8"><path d="M1.5 1.5 L6 6 L10.5 1.5" fill="none" stroke="#f2f2f2" stroke-width="2"/></svg>
<div class="a" style="left:1575px;top:804px;font-size:10.5px;color:#6e6e6e;letter-spacing:-0.3px">Render</div>
<div class="a" style="left:1630px;top:795px;width:199px;height:30px;background:#383838;border-radius:3px"></div>
<div class="a" style="left:1641px;top:803.5px;font-size:12.5px;color:#6e6e6e">Original (No Change)</div>
<svg class="a" style="left:1805px;top:806.0px" width="12" height="8" viewBox="0 0 12 8"><path d="M1.5 1.5 L6 6 L10.5 1.5" fill="none" stroke="#7a7a7a" stroke-width="1.6"/></svg>
<div class="a" style="left:1630px;top:834px;width:143px;height:30px;background:#383838;border-radius:3px"></div>
<div class="a" style="left:1641px;top:842.5px;font-size:12.5px;color:#6e6e6e">Transparent</div>
<svg class="a" style="left:1749px;top:845.0px" width="12" height="8" viewBox="0 0 12 8"><path d="M1.5 1.5 L6 6 L10.5 1.5" fill="none" stroke="#7a7a7a" stroke-width="1.6"/></svg>
<div class="a" style="left:1782px;top:837px;width:48px;height:24px;background:#a8a8a8;border-radius:3px"></div>
<div class="a" style="left:1555px;top:880px;width:295px;height:1.5px;background:#282828"></div>
<svg class="a" style="left:1572px;top:895px" width="8" height="12" viewBox="0 0 8 12"><path d="M1.5 1.5 L6 6 L1.5 10.5" fill="none" stroke="#e8e8e8" stroke-width="2"/></svg>
<div class="a" style="left:1594px;top:893px;font-size:13px;color:#dcdcdc;letter-spacing:-0.2px">Filters</div>
<svg class="a" style="left:1784px;top:894px" width="14" height="14" viewBox="0 0 14 14"><path d="M7 1 V13 M1 7 H13" stroke="#e0e0e0" stroke-width="2"/></svg>
<svg class="a" style="left:1809px;top:893px" width="16" height="16" viewBox="0 0 16 16"><circle cx="8" cy="8" r="4.3" fill="none" stroke="#e0e0e0" stroke-width="3"/><path d="M8 0.5 V3 M8 13 V15.5 M0.5 8 H3 M13 8 H15.5 M2.7 2.7 L4.5 4.5 M11.5 11.5 L13.3 13.3 M13.3 2.7 L11.5 4.5 M4.5 11.5 L2.7 13.3" stroke="#e0e0e0" stroke-width="2.4"/></svg>
<div class="a" style="left:1555px;top:920px;width:295px;height:1.5px;background:#282828"></div>
<svg class="a" style="left:1625px;top:948px" width="62" height="62" viewBox="0 0 62 62"><circle cx="31.2" cy="31.4" r="28.6" fill="#6e6e6e"/><path d="M31 6.5 C22 9 17 15 21 20.5 C24 23 27 23 31 23 C35 23 38 23 41 20.5 C45 15 40 9 31 6.5Z" fill="none" stroke="#323232" stroke-width="2.6"/><path d="M31 23 C19 23 10 28 10 36 C11 46 22 53.5 31 54 C40 53.5 51 46 52 36 C52 28 43 23 31 23Z" fill="none" stroke="#323232" stroke-width="3"/><path d="M31 6 V52" stroke="#323232" stroke-width="3"/></svg>
<div class="a" style="left:1692px;top:954px;font-size:26.5px;font-weight:bold;color:#6e6e6e;letter-spacing:2.2px;line-height:30px">BRAIN</div>
<div class="a" style="left:1692px;top:979px;font-size:22.5px;font-weight:bold;color:#6e6e6e;letter-spacing:0.7px;line-height:25px">BUFFET</div>
<div class="a" style="left:1555px;top:1041px;width:295px;height:2px;background:#282828"></div>
<div class="a" style="left:1850px;top:48px;width:2px;height:995px;background:#262626"></div>
<div class="a" style="left:1852px;top:48px;width:36px;height:357px;background:#2a2a2a"></div>
<div class="a" style="left:1852px;top:49.5px;width:35px;height:37.5px;background:#323232"></div>
<div class="a" style="left:1860px;top:54.0px;width:19px;height:1.2px;background:#3d3d3d"></div>
<div class="a" style="left:1852px;top:89.0px;width:35px;height:37.5px;background:#323232"></div>
<div class="a" style="left:1860px;top:93.5px;width:19px;height:1.2px;background:#3d3d3d"></div>
<div class="a" style="left:1852px;top:128.5px;width:35px;height:37.5px;background:#323232"></div>
<div class="a" style="left:1860px;top:133.0px;width:19px;height:1.2px;background:#3d3d3d"></div>
<div class="a" style="left:1852px;top:168.0px;width:35px;height:37.5px;background:#323232"></div>
<div class="a" style="left:1860px;top:172.5px;width:19px;height:1.2px;background:#3d3d3d"></div>
<div class="a" style="left:1852px;top:207.5px;width:35px;height:37.5px;background:#323232"></div>
<div class="a" style="left:1860px;top:212.0px;width:19px;height:1.2px;background:#3d3d3d"></div>
<div class="a" style="left:1852px;top:247.0px;width:35px;height:37.5px;background:#323232"></div>
<div class="a" style="left:1860px;top:251.5px;width:19px;height:1.2px;background:#3d3d3d"></div>
<div class="a" style="left:1852px;top:286.5px;width:35px;height:37.5px;background:#323232"></div>
<div class="a" style="left:1860px;top:291.0px;width:19px;height:1.2px;background:#3d3d3d"></div>
<div class="a" style="left:1852px;top:326.0px;width:35px;height:37.5px;background:#323232"></div>
<div class="a" style="left:1860px;top:330.5px;width:19px;height:1.2px;background:#3d3d3d"></div>
<div class="a" style="left:1852px;top:365.5px;width:35px;height:37.5px;background:#323232"></div>
<div class="a" style="left:1860px;top:370.0px;width:19px;height:1.2px;background:#3d3d3d"></div>
<svg class="a" style="left:1859px;top:61px" width="20" height="17" viewBox="0 0 20 17"><path d="M10 1.5 C4 1.5 1 5 1 9 C1 13 5 15.5 10 15.5 C15 15.5 19 13 19 10 C19 8 16 8 15 6 C14 3 13 1.5 10 1.5Z" fill="#d0d0d0"/><circle cx="6" cy="6" r="1.5" fill="#323232"/><circle cx="6" cy="11" r="1.5" fill="#323232"/><circle cx="11" cy="12" r="1.5" fill="#323232"/><circle cx="15" cy="11.5" r="1.3" fill="#323232"/></svg>
<svg class="a" style="left:1860px;top:102px" width="18" height="15" viewBox="0 0 18 15"><rect x="1" y="1" width="16" height="13" rx="1" fill="#c8c8c8"/><path d="M3 5 H7 M9 5 H15 M3 9 H5 M7 9 H11 M13 9 H15" stroke="#555" stroke-width="1.5"/></svg>
<svg class="a" style="left:1860px;top:141px" width="18" height="18" viewBox="0 0 18 18"><rect x="2.5" y="2.5" width="13" height="13" fill="none" stroke="#d0d0d0" stroke-width="2" stroke-dasharray="2 1.2"/><rect x="6" y="6" width="6" height="6" fill="#d0d0d0"/></svg>
<svg class="a" style="left:1861px;top:181px" width="17" height="18" viewBox="0 0 17 18"><rect x="1" y="1" width="2" height="16" fill="#d0d0d0"/><rect x="3" y="4" width="8" height="4" fill="#d0d0d0"/><rect x="3" y="10" width="13" height="5" fill="#d0d0d0"/></svg>
<svg class="a" style="left:1860px;top:221px" width="18" height="18" viewBox="0 0 18 18"><circle cx="9" cy="9" r="8" fill="#d8d8d8"/><rect x="8" y="7.5" width="2.2" height="6.5" fill="#323232"/><circle cx="9.1" cy="5" r="1.3" fill="#323232"/></svg>
<svg class="a" style="left:1859px;top:261px" width="20" height="18" viewBox="0 0 20 18"><circle cx="4.5" cy="13" r="3.5" fill="#d0d0d0"/><circle cx="11" cy="8" r="2.5" fill="#d0d0d0"/><circle cx="16" cy="3" r="2.3" fill="#d0d0d0"/></svg>
<svg class="a" style="left:1860px;top:299px" width="18" height="20" viewBox="0 0 18 20"><path d="M4 11 H14 L13 19 H5Z" fill="#d8d8d8"/><path d="M9 11 V4 M9 4 L5 1 M9 5 L14 2 M9 7 L3 5 M9 8 L15 6" stroke="#d8d8d8" stroke-width="1.8"/></svg>
<svg class="a" style="left:1860px;top:339px" width="18" height="18" viewBox="0 0 18 18"><path d="M1.5 1 V16.5 H17" fill="none" stroke="#c8c8c8" stroke-width="1.6"/><path d="M5 13 C8 10 10 9 14 6" fill="none" stroke="#c8c8c8" stroke-width="1.6"/><path d="M10 4.5 L15 4.5 L15 9.5Z" fill="#c8c8c8"/></svg>
<svg class="a" style="left:1859px;top:377px" width="20" height="20" viewBox="0 0 20 20"><rect x="1" y="1" width="18" height="18" fill="#c8c8c8"/><path d="M5 2 V7 M10 2 V7 M15 2 V7" stroke="#333" stroke-width="1.5"/><rect x="2" y="11" width="16" height="6" fill="#888"/><path d="M3 12 L9 16" stroke="#333" stroke-width="1"/></svg>
<!-- PLAYER -->
<div class="a" style="left:514px;top:807px;width:601px;height:4.5px;border-radius:2px;background:#7a7a7a"></div>
<div class="a" style="left:1542px;top:378px;width:4px;height:166px;border-radius:2px;background:#7a7a7a"></div>
<svg class="a" style="left:15px;top:1052px" width="22" height="20" viewBox="0 0 22 20"><path d="M2 1.5 L20 10 L2 18.5Z" fill="#ffffff"/></svg>
<div class="a" style="left:56px;top:1060px;width:455px;height:4px;background:#e6e6e6"></div>
<div class="a" style="left:511px;top:1060px;width:1094px;height:4px;background:#141414"></div>
<div class="a" style="left:502px;top:1054px;width:18px;height:17px;background:#f8f8f8;border:1px solid #e0c890;border-radius:3px"></div>
<div class="a" style="left:507px;top:1058px;width:1px;height:8px;background:#999"></div><div class="a" style="left:510px;top:1058px;width:1px;height:8px;background:#999"></div><div class="a" style="left:513px;top:1058px;width:1px;height:8px;background:#999"></div>
<div class="a" style="left:1089px;top:1048px;width:8px;height:8px;border:1.5px solid #e8e8e8;border-radius:50%"></div>
<div class="a" style="left:1410px;top:1048px;width:8px;height:8px;border:1.5px solid #e8e8e8;border-radius:50%"></div>
<svg class="a" style="left:1598px;top:1052px" width="20" height="20" viewBox="0 0 20 20"><path d="M10 1 L12.5 7 L19 7.5 L14 11.5 L15.5 18 L10 14.5 L4.5 18 L6 11.5 L1 7.5 L7.5 7Z" fill="#9a9a9a" stroke="#111" stroke-width="1"/></svg>
<div class="a" style="left:1631px;top:1054px;font-size:14px;color:#ffffff;letter-spacing:-0.3px">1:56</div>
<div class="a" style="left:1660px;top:1054px;font-size:14px;color:#9a9a9a;letter-spacing:-0.3px">/ 6:33</div>
<svg class="a" style="left:1717px;top:1052px" width="23" height="20" viewBox="0 0 23 20"><path d="M1.5 17 C0 10 5 3 11.5 3 C18 3 23 10 21.5 17Z" fill="#f0f0f0"/><path d="M11.5 16 L14 8" stroke="#2b2b2b" stroke-width="2"/><circle cx="11.5" cy="16" r="2" fill="#2b2b2b"/><circle cx="5" cy="12" r="1.2" fill="#2b2b2b"/><circle cx="7.5" cy="7.5" r="1.2" fill="#2b2b2b"/><circle cx="17.5" cy="12" r="1.2" fill="#2b2b2b"/></svg>
<svg class="a" style="left:1759px;top:1052px" width="23" height="20" viewBox="0 0 23 20"><path d="M1 7 H5 L10 2 V18 L5 13 H1Z" fill="#f0f0f0"/><path d="M13 6.5 C15 8 15 12 13 13.5" fill="none" stroke="#f0f0f0" stroke-width="2"/><path d="M16 4 C19.5 7 19.5 13 16 16" fill="none" stroke="#f0f0f0" stroke-width="2"/></svg>
<svg class="a" style="left:1798px;top:1051px" width="27" height="22" viewBox="0 0 27 22"><rect x="1.5" y="2" width="24" height="18" rx="2" fill="none" stroke="#f0f0f0" stroke-width="2.5"/><text x="13.5" y="16" text-anchor="middle" font-family="Liberation Sans" font-weight="bold" font-size="11" fill="#f0f0f0">CC</text></svg>
<svg class="a" style="left:1842px;top:1050px" width="24" height="24" viewBox="0 0 24 24"><circle cx="12" cy="12" r="5.5" fill="none" stroke="#7a7a7a" stroke-width="4"/><path d="M12 1.5 V5 M12 19 V22.5 M1.5 12 H5 M19 12 H22.5 M4.5 4.5 L7 7 M17 17 L19.5 19.5 M19.5 4.5 L17 7 M7 17 L4.5 19.5" stroke="#7a7a7a" stroke-width="3.5"/></svg>
<svg class="a" style="left:1884px;top:1050px" width="24" height="24" viewBox="0 0 24 24"><path d="M21 3 L14 10 M3 21 L10 14" stroke="#f0f0f0" stroke-width="2.5"/><path d="M13 4.5 V11 H19.5Z" fill="#f0f0f0"/><path d="M4.5 13 H11 V19.5Z" fill="#f0f0f0"/></svg>
<!-- STAGE -->
<svg class="a" style="left:295px;top:104px" width="1044" height="556" viewBox="295 104 1044 556">
<defs>
<linearGradient id="sky" x1="0" y1="0" x2="0" y2="1">
<stop offset="0" stop-color="#12135c"/>
<stop offset="0.17" stop-color="#13155f"/>
<stop offset="0.28" stop-color="#15186a"/>
<stop offset="0.41" stop-color="#1b2188"/>
<stop offset="0.48" stop-color="#1f25a0"/>
<stop offset="0.62" stop-color="#2329b5"/>
<stop offset="0.72" stop-color="#2a30c8"/>
<stop offset="1" stop-color="#2a30c8"/>
</linearGradient>
<radialGradient id="glow" cx="594" cy="385" r="260" gradientUnits="userSpaceOnUse" gradientTransform="translate(594 385) scale(1.2 1) translate(-594 -385)">
<stop offset="0" stop-color="#8a8070" stop-opacity="1"/>
<stop offset="0.44" stop-color="#6a6464" stop-opacity="0.88"/>
<stop offset="0.68" stop-color="#464460" stop-opacity="0.45"/>
<stop offset="1" stop-color="#2a2a70" stop-opacity="0"/>
</radialGradient>
<radialGradient id="sun" cx="594" cy="383" r="113" gradientUnits="userSpaceOnUse">
<stop offset="0" stop-color="#e58b1c"/>
<stop offset="0.55" stop-color="#f0bb22"/>
<stop offset="1" stop-color="#f8ea24"/>
</radialGradient>
</defs>
<rect x="295" y="104" width="1044" height="556" fill="url(#sky)"/>
<rect x="295" y="104" width="1044" height="556" fill="url(#glow)"/>
<circle cx="594" cy="381" r="112.5" fill="url(#sun)" stroke="#3a3a3a" stroke-width="0.8"/>
<!-- back hill -->
<path d="M295 353 C330 357 370 370 412 385 L480 400 L700 500 L749 497 C820 492 870 468 927 434 C980 402 1040 375 1156 368 C1200 366 1240 370 1263 374 L1339 380 L1339 660 L295 660 Z" fill="#034f52"/>
<!-- front hill -->
<path d="M295 400 C340 388 400 384 440 385 C540 388 610 420 680 460 C740 495 790 512 850 511 C950 508 1080 430 1263 374 C1290 368 1320 366 1339 365 L1339 660 L295 660 Z" fill="#046b6b"/>
<!-- guides -->
<line x1="295" y1="350.5" x2="1339" y2="350.5" stroke="#3a62d8" stroke-width="1.7" opacity="0.85"/>
<line x1="295" y1="364" x2="1339" y2="364" stroke="#2848d8" stroke-width="1.7" opacity="0.85"/>
<line x1="481" y1="350.5" x2="706" y2="350.5" stroke="#8a8468" stroke-width="1.6"/>
<line x1="481" y1="364" x2="706" y2="364" stroke="#8a8468" stroke-width="1.6"/>
<!-- grass left -->
<g>
<path d="M430 482 C390 540 340 600 303 660 L350 660 C370 610 400 540 430 482Z" fill="#0c8a35"/>
<path d="M295 580 C305 555 315 535 326 522 C320 570 312 620 306 660 L295 660Z" fill="#0a7a2c"/>
<path d="M342 520 C355 570 370 620 366 660 L386 660 C375 610 360 560 342 520Z" fill="#0b6a2a"/>
<path d="M295 575 L333 660 L353 660 Z" fill="#07602a"/>
<path d="M405 584 C398 610 393 640 391 660 L416 660 C414 640 410 610 405 584Z" fill="#044a1e"/>
<path d="M444 550 C436 590 426 630 420 660 L440 660 C441 620 443 580 444 550Z" fill="#086a2a"/>
<path d="M469 542 C455 580 440 620 431 660 L449 660 C455 620 462 580 469 542Z" fill="#0a5a25"/>
<path d="M460 614 L447 660 L454 660 Z" fill="#04501e"/>
<path d="M432 630 L443 660 L452 660 Z" fill="#0c8a35"/>
<path d="M461 600 L470 660 L481 660 Z" fill="#00a03a"/>
<path d="M500 584 L463 660 L472 660 Z" fill="#07602a"/>
<path d="M499 636 L493 660 L503 660 Z" fill="#0a7a30"/>
<path d="M537 612 L516 660 L527 660 Z" fill="#0c8a35"/>
</g>
<!-- grass mid -->
<path d="M849 620 L863 660 L875 660 Z" fill="#0c8a35"/>
<path d="M892 565 C900 600 910 630 906 660 L921 660 C912 625 902 595 892 565Z" fill="#00a03a"/>
<path d="M950 629 L943 660 L955 660 Z" fill="#087a2a"/>
<path d="M1007 587 C995 610 985 640 978 660 L994 660 C998 640 1003 610 1007 587Z" fill="#0c8a35"/>
<!-- grass right -->
<path d="M1161 612 L1180 660 L1195 660 Z" fill="#0c8a35"/>
<path d="M1200 568 L1215 660 L1230 660 Z" fill="#00a03a"/>
<path d="M1264 468 C1275 540 1288 600 1292 660 L1319 660 C1300 590 1282 530 1264 468Z" fill="#00a03a"/>
<path d="M1208 539 L1259 660 L1289 660 Z" fill="#0c8a35"/>
<path d="M1252 620 L1243 660 L1259 660 Z" fill="#087a2a"/>
<path d="M1302 589 L1264 660 L1289 660 Z" fill="#0c8a35"/>
<path d="M1339 555 C1330 590 1324 630 1321 660 L1339 660Z" fill="#087a2a"/>
<rect x="295.5" y="104.5" width="1043" height="555" fill="none" stroke="#141414" stroke-opacity="0.6" stroke-width="1"/>
</svg>

</body></html>
